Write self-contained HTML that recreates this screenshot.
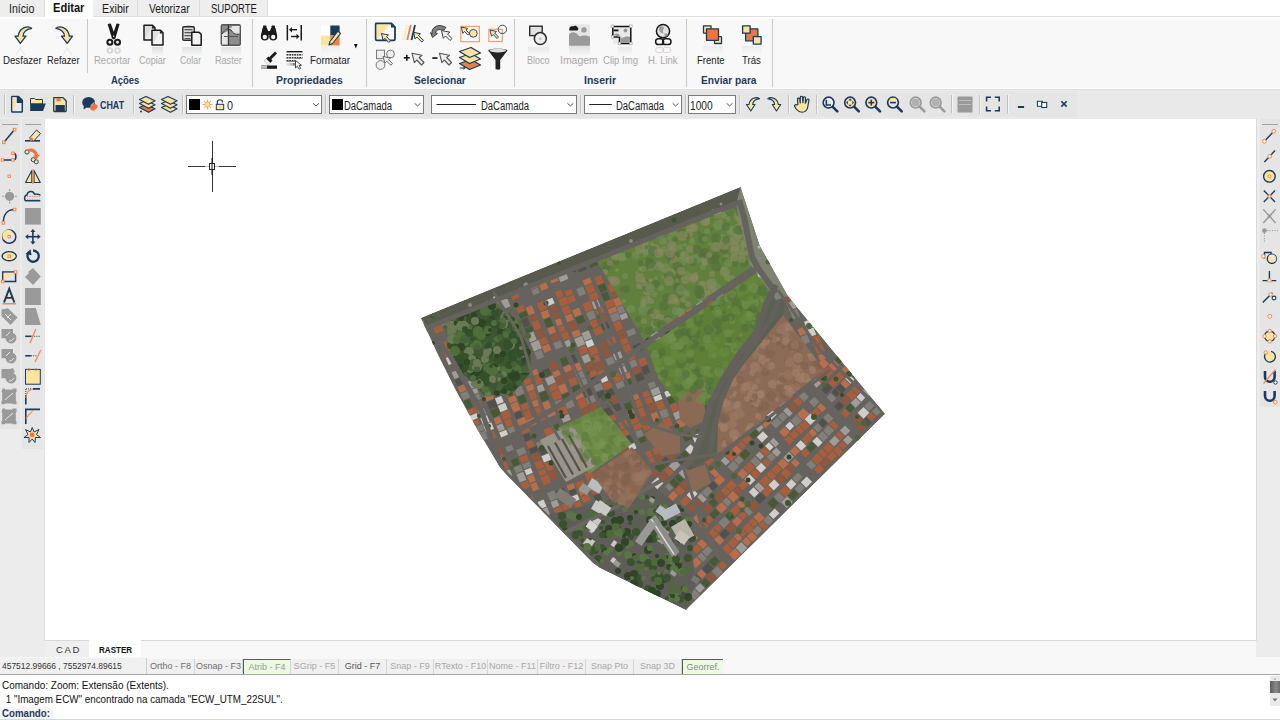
<!DOCTYPE html>
<html><head><meta charset="utf-8">
<style>
*{box-sizing:border-box;margin:0;padding:0}
html,body{width:1280px;height:720px;overflow:hidden;background:#fff}
body{position:relative;font-family:"Liberation Sans",sans-serif;color:#000}
.a{position:absolute}
.t{position:absolute;white-space:nowrap;line-height:1}
svg{position:absolute;overflow:visible}
.tab{position:absolute;top:0;height:16.6px;background:#eeeeee;border-right:1px solid #dcdcdc;font-size:12.5px;color:#1b1b1b}
.tab span{position:absolute;top:2px;white-space:nowrap}
.rl{position:absolute;font-size:11px;color:#a8a8a8;white-space:nowrap;line-height:1;top:55px}
.gl{position:absolute;font-size:10.5px;font-weight:bold;color:#1f3b5e;white-space:nowrap;line-height:1;top:75px}
.sep{position:absolute;top:19px;height:68px;width:1px;background:#c9c9c9}
.tsep{position:absolute;top:94px;height:20px;width:1px;background:#c4c4c4;border-right:1px solid #f6f6f6}
.dd{position:absolute;top:95px;height:19px;background:#fff;border:1px solid #7a7a7a}
.dd .v{position:absolute;right:4px;top:4px}
.sb{position:absolute;top:659px;height:15px;background:#f0f0f0;border-right:1px solid #d6d6d6;font-size:9px;color:#a8a8a8;text-align:center;line-height:15px;white-space:nowrap}
</style></head><body>

<!-- tab strip -->
<div class="tab" style="left:0;width:45px"><span style="left:9px;transform:scaleX(0.846);transform-origin:0 0">Início</span></div>
<div class="a" style="left:45px;top:0;width:48px;height:19px;background:#fff"></div>
<div class="t" style="left:53px;top:2px;font-size:12.5px;font-weight:bold;color:#111;transform:scaleX(0.887);transform-origin:0 0">Editar</div>
<div class="tab" style="left:93px;width:45px"><span style="left:9px;transform:scaleX(0.857);transform-origin:0 0">Exibir</span></div>
<div class="tab" style="left:138px;width:62px"><span style="left:11px;transform:scaleX(0.824);transform-origin:0 0">Vetorizar</span></div>
<div class="tab" style="left:200px;width:68px"><span style="left:11px;transform:scaleX(0.764);transform-origin:0 0">SUPORTE</span></div>

<!-- ribbon -->
<div class="a" style="left:0;top:19px;width:1280px;height:69px;background:#f8f8f8"></div>
<div class="a" style="left:93px;top:16px;width:1187px;height:1px;background:#dedede"></div>
<div class="a" style="left:0;top:88px;width:1280px;height:1px;background:#fff"></div>
<div class="a" style="left:0;top:89px;width:1280px;height:1px;background:#dcdcdc"></div>
<div class="sep" style="left:87px;height:54px"></div>
<div class="sep" style="left:252px"></div>
<div class="sep" style="left:366px"></div>
<div class="sep" style="left:514px"></div>
<div class="sep" style="left:686px"></div>
<div class="sep" style="left:772px"></div>

<div class="rl" style="left:3px;color:#222;transform:scaleX(0.879);transform-origin:0 0">Desfazer</div>
<div class="rl" style="left:47px;color:#222;transform:scaleX(0.846);transform-origin:0 0">Refazer</div>
<div class="rl" style="left:94px;transform:scaleX(0.864);transform-origin:0 0">Recortar</div>
<div class="rl" style="left:139px;transform:scaleX(0.830);transform-origin:0 0">Copiar</div>
<div class="rl" style="left:180px;transform:scaleX(0.802);transform-origin:0 0">Colar</div>
<div class="rl" style="left:215px;transform:scaleX(0.826);transform-origin:0 0">Raster</div>
<div class="rl" style="left:310px;color:#222;transform:scaleX(0.897);transform-origin:0 0">Formatar</div>
<div class="rl" style="left:527px;transform:scaleX(0.819);transform-origin:0 0">Bloco</div>
<div class="rl" style="left:560px;transform:scaleX(0.950);transform-origin:0 0">Imagem</div>
<div class="rl" style="left:603px;transform:scaleX(0.867);transform-origin:0 0">Clip Img</div>
<div class="rl" style="left:648px;transform:scaleX(0.865);transform-origin:0 0">H. Link</div>
<div class="rl" style="left:697px;color:#222;transform:scaleX(0.869);transform-origin:0 0">Frente</div>
<div class="rl" style="left:742px;color:#222;transform:scaleX(0.872);transform-origin:0 0">Trás</div>

<div class="gl" style="left:111px;transform:scaleX(0.9);transform-origin:0 0">Ações</div>
<div class="gl" style="left:276px;transform:scaleX(0.996);transform-origin:0 0">Propriedades</div>
<div class="gl" style="left:414px;transform:scaleX(0.976);transform-origin:0 0">Selecionar</div>
<div class="gl" style="left:584px;transform:scaleX(1.0);transform-origin:0 0">Inserir</div>
<div class="gl" style="left:701px;transform:scaleX(0.971);transform-origin:0 0">Enviar para</div>



<!-- toolbar -->
<div class="a" style="left:0;top:90px;width:1280px;height:29px;background:#e9e9e9"></div>
<div class="a" style="left:0;top:91px;width:1077px;height:26px;background:#e5e5e5"></div>

<!--RIBBON--><svg style="left:0;top:0" width="1280" height="90" viewBox="0 0 1280 90">
<defs>
<linearGradient id="rf" x1="0" y1="0" x2="0" y2="1"><stop offset="0" stop-color="#000" stop-opacity=".18"/><stop offset="1" stop-color="#000" stop-opacity="0"/></linearGradient>
</defs>
<g stroke="#1b3a5c" stroke-width="1.3" fill="#fbe3a0" stroke-linejoin="round">
<path d="M15,36.2 L20.3,43.4 L26,36.2 L23,36.2 C23.2,32 26.5,29.2 31.6,28.3 C28.5,25.6 19.5,26.5 18.2,36.2 Z"/>
<path d="M72.5,36.2 L67.2,43.4 L61.5,36.2 L64.5,36.2 C64.3,32 61,29.2 55.9,28.3 C59,25.6 68,26.5 69.3,36.2 Z"/>
</g>
<g fill="none" stroke="#ccc" stroke-width=".6" opacity=".7"><path d="M16,55 L20.3,48 L25,55"/><path d="M63,55 L67.2,48 L72,55"/></g>
<!-- scissors -->
<g fill="#1a1a1a">
<path d="M107.6,24 L110.8,23.6 L115.2,35.8 L113.4,39.5 L112,38.5 Z"/>
<path d="M119.6,24 L116.6,23.6 L112.4,35.8 L114,39.5 L115.4,38.5 Z"/>
</g>
<circle cx="113.7" cy="36.3" r=".8" fill="#ddd"/>
<g fill="none" stroke="#1a1a1a" stroke-width="2.1"><circle cx="109.9" cy="42.3" r="2.5"/><circle cx="117.5" cy="42.3" r="2.5"/></g>
<g fill="none" stroke="#000" stroke-width="1.8" opacity=".12"><circle cx="109.9" cy="50.5" r="2.4"/><circle cx="117.5" cy="50.5" r="2.4"/></g>
<!-- copy -->
<g stroke="#1a1a1a" stroke-width="1.5" fill="#ebebeb" stroke-linejoin="round">
<path d="M144,25.2 L152.5,25.2 L155,27.7 L155,40 L144,40 Z"/>
<path d="M152,30.2 L160.5,30.2 L163,32.7 L163,45 L152,45 Z" fill="#f4f4f4"/>
</g>
<path d="M151.8,25.4 L154.8,28.4 L151.8,28.4Z" fill="#1a1a1a"/>
<path d="M159.8,30.4 L162.8,33.4 L159.8,33.4Z" fill="#1a1a1a"/>
<path d="M145,39 L152,26 L145,26Z" fill="#dcdcdc"/>
<path d="M153,44 L160,31 L153,31Z" fill="#e2e2e2"/>
<rect x="152" y="47" width="11" height="9" fill="url(#rf)" opacity=".6"/>
<!-- paste -->
<path d="M186.5,25.5 L190.5,25.5 L190.5,27 L186.5,27Z" fill="#999"/>
<g stroke="#2a2a2a" stroke-width="1.4" stroke-linejoin="round">
<rect x="182.8" y="26.8" width="11.5" height="13.4" rx="1" fill="#ddd"/>
</g>
<g fill="#555"><rect x="184.5" y="29" width="8" height="1.3"/><rect x="184.5" y="32" width="8" height="1.3"/><rect x="184.5" y="35" width="8" height="1.3"/><rect x="184.5" y="38" width="6" height="1"/></g>
<path d="M191.8,32.2 L199,32.2 L201.2,34.4 L201.2,45.2 L191.8,45.2 Z" stroke="#1a1a1a" stroke-width="1.5" fill="#f2f2f2" stroke-linejoin="round"/>
<rect x="182" y="47" width="20" height="9" fill="url(#rf)" opacity=".5"/>
<!-- raster -->
<rect x="221.3" y="24.8" width="19" height="20.4" rx="1.5" fill="#8e8e8e" stroke="#555" stroke-width="1.4"/>
<path d="M222,33 C225,29 228,28 231,30 C233,33 235,35 239.5,34 L239.5,26 L232,26 C233,27 231,28 229,28 Z" fill="#e6e6e6"/>
<path d="M222,34 L222,44.5 L228,44.5 L228,31 Z" fill="#e6e6e6"/>
<path d="M222,34 C225,29 228,28 231,30 C233,33 235,35 239.5,34" fill="none" stroke="#333" stroke-width="1"/>
<rect x="227.8" y="25" width="1.3" height="20" fill="#333"/>
<rect x="224" y="36" width="14" height="1" fill="#555"/>
<rect x="221" y="47" width="20" height="9" fill="url(#rf)" opacity=".5"/>
<!-- binoculars -->
<g fill="#1a1a1a">
<rect x="263" y="25.5" width="3.5" height="3" rx=".8"/><rect x="271.5" y="25.5" width="3.5" height="3" rx=".8"/>
<path d="M262.5,28 L267,28 L268,31 L270,31 L271,28 L275.5,28 L277,35 L261,35 Z"/>
<circle cx="264.8" cy="36.5" r="4"/><circle cx="273.2" cy="36.5" r="4"/>
</g>
<g fill="#f0f0f0"><circle cx="264.8" cy="37" r="2.2"/><circle cx="273.2" cy="37" r="2.2"/></g>
<!-- |<-> | -->
<g fill="#1a1a1a">
<rect x="286.6" y="25" width="1.5" height="15.5"/><rect x="300.5" y="25" width="1.5" height="15.5"/>
<rect x="290" y="29" width="7" height="1.4"/><path d="M289,29.7 L292,27 L292,32.4Z"/>
<rect x="291" y="35.8" width="7" height="1.4"/><path d="M299.5,36.5 L296.5,33.8 L296.5,39.2Z"/>
</g>
<!-- brush -->
<g fill="#1a1a1a">
<path d="M275,51.5 L277,53.5 L271,59.5 L269,57.5Z"/>
<path d="M268.5,56.5 L272.5,60.5 L268.5,65 L264,60.5Z"/>
</g>
<path d="M266,58.5 L270.5,63 L268.5,65 L264,60.5Z" fill="#f2f2f2"/>
<rect x="261" y="65.5" width="16" height="3.3" fill="#1a1a1a"/>
<rect x="261" y="65.5" width="6" height="3.3" fill="#bbb"/>
<!-- table -->
<rect x="286.5" y="51" width="16" height="1.4" fill="#1a1a1a"/>
<g fill="#3a3a3a"><rect x="286.5" y="54" width="16" height="1.6"/><rect x="286.5" y="57" width="16" height="1.6"/><rect x="286.5" y="60" width="9" height="1.6"/></g>
<g fill="#f8f8f8"><rect x="288.5" y="54" width=".7" height="7"/><rect x="291" y="54" width=".7" height="7"/><rect x="293.5" y="54" width=".7" height="7"/><rect x="296" y="54" width=".7" height="4"/><rect x="298.5" y="54" width=".7" height="4"/><rect x="301" y="54" width=".7" height="4"/></g>
<g fill="#9a9a9a"><rect x="286.5" y="63" width="3" height="2.6" fill="#ddd"/><rect x="289.5" y="63" width="3" height="2.6" fill="#bbb"/><rect x="292.5" y="63" width="3" height="2.6" fill="#888"/></g>
<path d="M295.5,60.5 L295.5,68 L297.3,66.3 L299.2,69.2 L300.7,68.4 L299,65.6 L301.5,65.3 Z" fill="#fff" stroke="#333" stroke-width=".9" stroke-linejoin="round"/>
<!-- format -->
<rect x="321" y="25.5" width="9.3" height="10" fill="#fff"/>
<rect x="330.3" y="25.5" width="9.3" height="10" fill="#1b3a5c"/>
<rect x="321" y="35.5" width="9.3" height="10" fill="#fbe3a0"/>
<rect x="330.3" y="35.5" width="9.3" height="10" fill="#e8824a"/>
<path d="M338,31 L340.5,33.5 L332.5,43.5 L329,45 L330,41.5 Z" fill="#fbe3a0" stroke="#1b3a5c" stroke-width="1.1" stroke-linejoin="round"/>
<rect x="321" y="46" width="19" height="10" fill="url(#rf)" opacity=".25"/>
<path d="M354,44 L357.6,44 L355.8,48.4Z" fill="#111"/>
</svg>
<svg style="left:0;top:0" width="1280" height="90" viewBox="0 0 1280 90">
<!-- select box -->
<path d="M376,23.5 L391.5,23.5 L395,27 L395,39 C395,40 394.5,40.3 393.5,40.3 L377,40.3 C376,40.3 375.7,40 375.7,39 L375.7,24.5 C375.7,23.8 376,23.5 376,23.5Z" fill="#fafafa" stroke="#1b3a5c" stroke-width="1.8"/>
<path d="M376.6,24.4 L390,24.4 L376.6,39.4Z" fill="#fbe3a0"/>
<path d="M391,23.5 L395,27.5 L391,27.5Z" fill="#1b3a5c"/>
<path d="M381.5,33.5 L388.5,35 L386.5,36.6 L390.5,40.8 L388.8,42.4 L384.8,38.3 L383,40.2 Z" fill="#fbe3a0" stroke="#1b3a5c" stroke-width="1" stroke-linejoin="round"/>
<!-- lines + cursor -->
<path d="M403.5,40 L407,25" stroke="#fbe3a0" stroke-width="1.6" stroke-dasharray="1 .6"/>
<path d="M407.3,40 L410.8,25" stroke="#e8824a" stroke-width="1.8"/>
<path d="M411.5,40 L415,25" stroke="#1b3a5c" stroke-width="1.8"/>
<path d="M413.5,32.3 L420.5,33.8 L418.5,35.4 L423.5,40.4 L421.8,42 L416.8,37 L415,38.9 Z" fill="#fbe3a0" stroke="#1b3a5c" stroke-width="1" stroke-linejoin="round"/>
<!-- rotate cursor -->
<path d="M432,34 C431,28 437,23.5 444,26.5 L446,27.5 L443.5,30.5 C439,28.5 436,30 435.5,33 L437.5,33.5 L432.5,37.5 L430.5,32.5Z" fill="#808080" stroke="#333" stroke-width=".9" stroke-linejoin="round"/>
<path d="M441.5,30.5 L450,32.2 L447.5,34 L452,38.6 L450,40.5 L445.5,36 L443.3,38.3 Z" fill="#eee" stroke="#444" stroke-width="1" stroke-linejoin="round"/>
<!-- orange rect + cursor + circle -->
<rect x="460.8" y="26.4" width="18.6" height="15.3" fill="none" stroke="#f0a070" stroke-width="1.2"/>
<circle cx="473.3" cy="33.3" r="3.9" fill="#fbe3a0" stroke="#1b3a5c" stroke-width=".9"/>
<path d="M461.3,27 L467.8,28.5 L466,30 L469.3,33.5 L467.8,35 L464.5,31.5 L462.8,33.3 Z" fill="#fbe3a0" stroke="#1b3a5c" stroke-width=".9" stroke-linejoin="round"/>
<rect x="488.8" y="29.3" width="13.5" height="12.2" fill="none" stroke="#f0a070" stroke-width="1.2"/>
<circle cx="502.4" cy="29.4" r="4.2" fill="none" stroke="#1b3a5c" stroke-width=".9"/>
<path d="M490,30 L496.5,31.5 L494.7,33 L498.5,37 L497,38.5 L493.2,34.5 L491.5,36.3 Z" fill="#fbe3a0" stroke="#1b3a5c" stroke-width=".9" stroke-linejoin="round"/>
<!-- row 2: shapes cursor -->
<g fill="#eee" stroke="#777" stroke-width="1">
<rect x="376.5" y="50.2" width="8" height="8.5"/>
<circle cx="380.5" cy="65" r="4.4"/>
<circle cx="390.5" cy="54" r="3.9"/>
</g>
<path d="M383,56.5 L390.5,58 L388.5,59.6 L392.5,63.6 L390.8,65.3 L386.8,61.3 L385,63.2 Z" fill="#eee" stroke="#666" stroke-width="1" stroke-linejoin="round"/>
<!-- + cursor -->
<g fill="#1a1a1a"><rect x="403.8" y="57" width="6" height="1.6"/><rect x="406" y="54.8" width="1.6" height="6"/></g>
<path d="M412,53.3 L422,55.3 L419.2,57.5 L424,62.5 L421.5,65 L416.8,60 L414.4,62.7 Z" fill="#eee" stroke="#555" stroke-width="1.1" stroke-linejoin="round"/>
<!-- - cursor -->
<rect x="432.3" y="57.2" width="5.2" height="1.7" fill="#1a1a1a"/>
<path d="M439.5,53.3 L449.5,55.3 L446.7,57.5 L451.5,62.5 L449,65 L444.3,60 L441.9,62.7 Z" fill="#eee" stroke="#555" stroke-width="1.1" stroke-linejoin="round"/>
<!-- layers -->
<g stroke="#1b3a5c" stroke-width="1.3" stroke-linejoin="round">
<path d="M459.5,63.5 L471,59.5 L480.5,65 L469.5,69.5Z" fill="#e8824a"/>
<path d="M459.5,57.5 L471,53.5 L480.5,59 L469.5,63.5Z" fill="#fbe3a0"/>
<path d="M459.5,51.5 L471,47.5 L480.5,53 L469.5,57.5Z" fill="#fbe3a0"/>
</g>
<path d="M459.5,67.5 L463.5,67.5 L463.5,66 L465.5,68 L463.5,70 L463.5,68.5 L459.5,68.5Z" fill="#1b3a5c"/>
<!-- funnel -->
<path d="M488.2,50.5 C488.2,48.3 507.5,48.3 507.5,50.5 L500.2,60 L500.2,68.8 C500.2,70 495.5,70 495.5,68.8 L495.5,60 Z" fill="#222"/>
<ellipse cx="497.85" cy="50.6" rx="8.3" ry="1.8" fill="#ddd"/>
<!-- bloco -->
<rect x="529.7" y="26.2" width="12.5" height="9.4" fill="#e2e2e2" stroke="#2a2a2a" stroke-width="1.4"/>
<circle cx="540.3" cy="38.6" r="6" fill="#eee" stroke="#2a2a2a" stroke-width="1.5"/>
<circle cx="540.3" cy="38.8" r=".9" fill="none" stroke="#999" stroke-width=".6"/>
<rect x="528" y="47" width="21" height="8" fill="url(#rf)" opacity=".35"/>
<!-- imagem -->
<rect x="569" y="24.2" width="21" height="21.5" fill="#e6e6e6"/>
<path d="M569,34.5 C571,31.5 576,31.5 578,35 L580,36.5 C582,35 588,35 590,37 L590,45.7 L569,45.7 Z" fill="#9a9a9a"/>
<circle cx="584" cy="29.9" r="2.7" fill="#9a9a9a"/>
<path d="M569.5,28.5 C569.5,26.5 572,26 573,26.5 C574,25.5 577,25.5 577.5,27.5 C578.5,27.5 578.8,29.5 577.5,30.5 L570,30.5 C569,30.5 569,29 569.5,28.5Z" fill="#1a1a1a"/>
<rect x="569" y="46" width="21" height="10" fill="url(#rf)" opacity=".55"/>
<!-- clip img -->
<rect x="613" y="26.8" width="17.6" height="17" fill="#e9e9e9"/>
<path d="M612.8,26.5 L630.8,26.5 L630.8,43.5 L619.5,43.5 L619.5,37 L612.8,37 Z" fill="none" stroke="#111" stroke-width="1.5"/>
<path d="M614,35 C616,33 619,33 620,36 L621,42.8 L630,42.8 L630,37 C627,36 624,37 622,38" fill="#9a9a9a"/>
<circle cx="625.5" cy="30.5" r="2" fill="#9a9a9a"/>
<path d="M613.5,29.5 L618.5,29.5 L618.5,31.3 L613.5,31.3Z" fill="#111"/>
<g fill="#fff" stroke="#999" stroke-width=".6"><rect x="611.2" y="25" width="2.6" height="2.6"/><rect x="629.5" y="25" width="2.6" height="2.6"/><rect x="611.2" y="35.6" width="2.6" height="2.6"/><rect x="618.2" y="42.2" width="2.6" height="2.6"/><rect x="629.5" y="42.2" width="2.6" height="2.6"/></g>
<rect x="618" y="47" width="14" height="8" fill="url(#rf)" opacity=".35"/>
<!-- hlink -->
<circle cx="663" cy="31.2" r="6.6" fill="#e2e2e2" stroke="#1a1a1a" stroke-width="1.5"/>
<path d="M659.5,27 C661,25.5 664,26 664,28 C663,30 662,31 663.5,33 C662,34 660,32 659,30 Z" fill="#9a9a9a"/>
<path d="M664.5,33.5 C666.5,33 668,34 667.5,36 C666,37 665,36.5 664.5,35Z" fill="#9a9a9a"/>
<g fill="none" stroke="#1a1a1a" stroke-width="1.5"><rect x="655.6" y="38.8" width="8" height="5.8" rx="2.9"/><rect x="662.6" y="38.8" width="8.4" height="5.8" rx="2.9"/></g>
<g fill="none" stroke="#000" stroke-width="1" opacity=".13"><rect x="655.6" y="47.5" width="8" height="5" rx="2.5"/><rect x="662.6" y="47.5" width="8.4" height="5" rx="2.5"/></g>
<!-- frente -->
<g stroke="#1b3a5c" stroke-width="1.3" stroke-linejoin="round">
<rect x="703.5" y="25.8" width="7.5" height="7.3" fill="#fbe3a0"/>
<rect x="714.5" y="36.7" width="7" height="6.8" fill="#fbe3a0"/>
<rect x="706.5" y="28.8" width="12" height="11.5" fill="#ee7440"/>
<rect x="745.6" y="28.8" width="12.3" height="12" fill="#ee7440"/>
<rect x="742.6" y="25.8" width="7.5" height="7.4" fill="#fbe3a0"/>
<rect x="753.3" y="36.7" width="7.8" height="7.4" fill="#fbe3a0"/>
</g>
<rect x="703" y="46" width="20" height="9" fill="url(#rf)" opacity=".3"/>
<rect x="742" y="46" width="20" height="9" fill="url(#rf)" opacity=".3"/>
</svg>
<svg style="left:0;top:0" width="1280" height="120" viewBox="0 0 1280 120">
<g fill="#c2c2c2"><rect x="4" y="94" width="1" height="20.5"/><rect x="73" y="95" width="1" height="18.5"/><rect x="133" y="95" width="1" height="18.5"/><rect x="182" y="95" width="1" height="18.5"/><rect x="325" y="95" width="1" height="18.5"/><rect x="580" y="95" width="1" height="18.5"/><rect x="685" y="95" width="1" height="18.5"/><rect x="739" y="95" width="1" height="18.5"/><rect x="788" y="95" width="1" height="18.5"/><rect x="816" y="95" width="1" height="18.5"/><rect x="951" y="95" width="1" height="18.5"/><rect x="979" y="95" width="1" height="18.5"/><rect x="1007" y="95" width="1" height="18.5"/></g>
<g fill="#f4f4f4"><rect x="5" y="94" width="1" height="20.5"/><rect x="74" y="95" width="1" height="18.5"/><rect x="134" y="95" width="1" height="18.5"/><rect x="183" y="95" width="1" height="18.5"/><rect x="326" y="95" width="1" height="18.5"/><rect x="581" y="95" width="1" height="18.5"/><rect x="686" y="95" width="1" height="18.5"/><rect x="740" y="95" width="1" height="18.5"/><rect x="789" y="95" width="1" height="18.5"/><rect x="817" y="95" width="1" height="18.5"/><rect x="952" y="95" width="1" height="18.5"/><rect x="980" y="95" width="1" height="18.5"/><rect x="1008" y="95" width="1" height="18.5"/></g>
<!-- new doc -->
<path d="M11.8,96.6 L18.5,96.6 L22.3,100.4 L22.3,111.2 C22.3,111.8 22,112 21.4,112 L12.6,112 C12,112 11.7,111.8 11.7,111.2 Z" fill="#e6ebf0" stroke="#1b3a5c" stroke-width="1.5" stroke-linejoin="round"/>
<path d="M12.5,97.3 L15.8,97.3 L15.8,106 L12.5,111.3Z" fill="#fbe3a0"/>
<path d="M16.8,97 L18.5,97 L22,100.5 L22,103 L16.8,103 Z" fill="#1b3a5c"/>
<!-- open folder -->
<path d="M30.5,98.5 L34.5,98.5 L35.5,99.5 L42.5,99.5 L42.5,104 L30.5,104Z" fill="#fbe3a0" stroke="#1b3a5c" stroke-width="1"/>
<path d="M30.2,111 L30.2,103.5 L45.8,103.5 L43,111Z" fill="#1b3a5c"/>
<!-- save -->
<path d="M53.8,97.6 L63,97.6 L66.2,101 L66.2,110.8 C66.2,111.3 66,111.5 65.5,111.5 L54.4,111.5 C53.9,111.5 53.7,111.3 53.7,110.8 Z" fill="#fbe3a0" stroke="#1b3a5c" stroke-width="1.3" stroke-linejoin="round"/>
<rect x="56.5" y="98" width="4" height="3.2" fill="#ee7440"/>
<rect x="55.5" y="105" width="9.3" height="6" fill="#1b3a5c"/>
<!-- chat -->
<ellipse cx="88.6" cy="102.4" rx="6.4" ry="5.4" fill="#1b3a5c"/>
<path d="M84,105.5 L83.5,109.5 L88,106.5Z" fill="#1b3a5c"/>
<path d="M92,104.5 C95,103 98,104.5 97.5,107 C97,109 95,110 94,110 L95,111.5 L91.5,110 C90,109.5 89.5,106.5 92,104.5Z" fill="#ee7440"/>
<path d="M94.5,102.3 C93,104 91.5,104.5 90.5,106" stroke="#e6e6e6" stroke-width="1" fill="none"/>
<!-- layers 1 -->
<g stroke="#1b3a5c" stroke-width="1.2" stroke-linejoin="round">
<path d="M139.5,107.5 L146,104.5 L155,108.8 L148.5,112.3Z" fill="#ee7440"/>
<path d="M139.5,103.5 L146,100.5 L155,104.8 L148.5,108.3Z" fill="#fbe3a0"/>
<path d="M139.5,99.5 L146,96.5 L155,100.8 L148.5,104.3Z" fill="#fbe3a0"/>
<path d="M161.5,107.5 L168,104.5 L177,108.8 L170.5,112.3Z" fill="#fbe3a0"/>
<path d="M161.5,103.5 L168,100.5 L177,104.8 L170.5,108.3Z" fill="#fbe3a0"/>
<path d="M161.5,99.5 L168,96.5 L177,100.8 L170.5,104.3Z" fill="#fbe3a0"/>
</g>
<circle cx="141" cy="111.5" r="1" fill="#1b3a5c"/>
<!-- small undo/redo -->
<g stroke="#1b3a5c" stroke-width="1.1" fill="#fbe3a0" stroke-linejoin="round">
<path d="M746.5,104.5 L750.8,111 L755,104.5 L752.7,104.5 C752.8,101.3 755,99.3 759.5,98.6 C756.5,96.6 750,97.8 749,104.5 Z"/>
<path d="M780.8,104.5 L776.5,111 L772.3,104.5 L774.6,104.5 C774.5,101.3 772.3,99.3 767.8,98.6 C770.8,96.6 777.3,97.8 778.3,104.5 Z"/>
</g>
<!-- hand -->
<path transform="translate(794.4 96) scale(1.12 1) translate(-794.4 -96)" d="M797.5,104.5 L797.2,99 C797.2,97.8 799,97.8 799.2,99 L799.6,103 L799.7,97.2 C799.7,96 801.6,96 801.7,97.2 L802,102.8 L802.4,97.6 C802.5,96.5 804.3,96.5 804.3,97.8 L804.2,103.3 L805.6,99.6 C806,98.6 807.6,98.9 807.4,100 L806.5,106 C806,110 804,112.3 801,112.3 C798.5,112.3 797.5,111 796,109 L794.6,106.3 C794,105.2 795.5,104.2 796.5,105 Z" fill="#fbe3a0" stroke="#1b3a5c" stroke-width="1.1" stroke-linejoin="round"/>
<!-- magnifiers -->
<g stroke="#1b3a5c" fill="none">
<g stroke-width="1.7"><circle cx="828.6" cy="102.6" r="5.4"/><circle cx="850.1" cy="102.6" r="5.4"/><circle cx="871.3" cy="102.6" r="5.4"/><circle cx="893" cy="102.6" r="5.4"/></g>
<g stroke-width="2.6" stroke-linecap="round"><path d="M832.8,106.8 L837.3,111.3"/><path d="M854.3,106.8 L858.8,111.3"/><path d="M875.5,106.8 L880,111.3"/><path d="M897.2,106.8 L901.7,111.3"/></g>
</g>
<circle cx="828.6" cy="102.6" r="3.8" fill="none" stroke="#fff" stroke-width="1"/>
<path d="M826.3,99.8 L826.3,105 L831,105" fill="none" stroke="#1b3a5c" stroke-width="1.6"/>
<circle cx="850.1" cy="102.6" r="4.2" fill="#fbe3a0"/>
<g fill="#1b3a5c"><path d="M850.1,98.6 L852,100.4 L848.2,100.4Z"/><path d="M850.1,106.6 L852,104.8 L848.2,104.8Z"/><path d="M846.1,102.6 L847.9,100.7 L847.9,104.5Z"/><path d="M854.1,102.6 L852.3,100.7 L852.3,104.5Z"/></g>
<circle cx="871.3" cy="102.6" r="4.2" fill="#fbe3a0"/>
<g fill="#1b3a5c"><rect x="868.3" y="101.8" width="6" height="1.6"/><rect x="870.5" y="99.6" width="1.6" height="6"/></g>
<path d="M889,101 A4.2,4.2 0 0 1 897.2,101 Z" fill="#fbe3a0"/>
<path d="M893,98.4 A4.2,4.2 0 0 1 897.2,102.6 L888.8,102.6 A4.2,4.2 0 0 1 893,98.4Z" fill="#fbe3a0"/>
<rect x="890" y="101.8" width="6" height="1.6" fill="#1b3a5c"/>
<g stroke="#9a9a9a" fill="none">
<g stroke-width="1.7"><circle cx="915.7" cy="102.6" r="5.4"/><circle cx="935.7" cy="102.6" r="5.4"/></g>
<g stroke-width="2.6" stroke-linecap="round"><path d="M919.9,106.8 L924.4,111.3"/><path d="M939.9,106.8 L944.4,111.3"/></g>
</g>
<circle cx="915.7" cy="102.6" r="4" fill="#b0b0b0"/><circle cx="935.7" cy="102.6" r="4" fill="#b0b0b0"/>
<!-- grey rect icon -->
<rect x="957.5" y="96.5" width="15" height="16" fill="#9a9a9a"/>
<g fill="#c8c8c8"><rect x="959" y="100" width="12" height=".8"/><rect x="959" y="104" width="12" height=".8"/></g>
<!-- fullscreen -->
<path d="M986.6,101.5 L986.6,97.3 L991,97.3 M994.8,97.3 L999.2,97.3 L999.2,101.5 M999.2,106.5 L999.2,110.8 L994.8,110.8 M991,110.8 L986.6,110.8 L986.6,106.5" fill="none" stroke="#1b3a5c" stroke-width="1.6"/>
<!-- min restore close -->
<rect x="1017.9" y="106" width="6.2" height="2" fill="#1b3a5c"/>
<rect x="1037.4" y="101.3" width="5" height="5" fill="#fff" stroke="#1b3a5c" stroke-width="1"/>
<rect x="1041.7" y="102.5" width="5" height="5" fill="#fff" stroke="#1b3a5c" stroke-width="1.1"/>
<path d="M1061.3,101.3 L1066.7,106.6 M1066.7,101.3 L1061.3,106.6" stroke="#1b3a5c" stroke-width="1.6"/>
</svg>
<!--/RIBBON-->
<!-- toolbar widgets -->
<div class="t" style="left:100px;top:100px;font-size:11px;font-weight:bold;color:#1b3a5c;transform:scaleX(0.81);transform-origin:0 0">CHAT</div>
<div class="dd" style="left:186px;width:136px"></div>
<div class="a" style="left:189px;top:99px;width:11px;height:11px;background:#000"></div>
<div class="t" style="left:227px;top:100px;font-size:12px;color:#222;transform:scaleX(0.9);transform-origin:0 0">0</div>
<div class="dd" style="left:329px;width:95px"></div>
<div class="a" style="left:332px;top:99px;width:11px;height:11px;background:#000"></div>
<div class="t" style="left:344px;top:100px;font-size:12px;color:#222;transform:scaleX(0.79);transform-origin:0 0">DaCamada</div>
<div class="dd" style="left:431px;width:146px"></div>
<div class="t" style="left:481px;top:100px;font-size:12px;color:#222;transform:scaleX(0.79);transform-origin:0 0">DaCamada</div>
<div class="dd" style="left:584px;width:98px"></div>
<div class="t" style="left:616px;top:100px;font-size:12px;color:#222;transform:scaleX(0.79);transform-origin:0 0">DaCamada</div>
<div class="dd" style="left:688px;width:48px"></div>
<div class="t" style="left:690px;top:100px;font-size:12px;color:#222;transform:scaleX(0.85);transform-origin:0 0">1000</div>
<svg style="left:0;top:0" width="1280" height="120" viewBox="0 0 1280 120">
<g stroke="#f2a05a" stroke-width="1"><path d="M207.4,99.5 L207.4,109.5 M202.4,104.5 L212.4,104.5 M203.9,101 L210.9,108 M210.9,101 L203.9,108"/></g>
<circle cx="207.4" cy="104.5" r="2.6" fill="#fbe3a0" stroke="#f2a05a" stroke-width=".8"/>
<path d="M217.3,104.5 L217.3,102 C217.3,99 222.5,99 222.5,102 L222.5,102.5" fill="none" stroke="#1b3a5c" stroke-width="1.2"/>
<rect x="216.3" y="104.3" width="7.4" height="5.4" fill="#fbe3a0" stroke="#1b3a5c" stroke-width="1"/>
<g fill="none" stroke="#555" stroke-width="1"><path d="M313,103.2 L316,106 L319,103.2"/><path d="M414.6,103.2 L417.6,106 L420.6,103.2"/><path d="M567.4,103.2 L570.4,106 L573.4,103.2"/><path d="M672.6,103.2 L675.6,106 L678.6,103.2"/><path d="M726.6,103.2 L729.6,106 L732.6,103.2"/></g>
<rect x="436.5" y="104" width="39.5" height="1" fill="#222"/>
<rect x="589.2" y="104" width="22.6" height="1" fill="#222"/>
</svg>

<!-- left panel -->
<div class="a" style="left:0;top:119px;width:45px;height:539px;background:#ececec"></div>
<div class="a" style="left:0;top:119px;width:20px;height:310px;background:#e5e5e5"></div>
<div class="a" style="left:22px;top:119px;width:21px;height:330px;background:#e5e5e5"></div>
<div class="a" style="left:2px;top:124px;width:16px;height:1px;background:#a0a0a0"></div>
<div class="a" style="left:25px;top:124px;width:16px;height:1px;background:#a0a0a0"></div>

<!-- right panel -->
<div class="a" style="left:1256px;top:119px;width:24px;height:539px;background:#ececec"></div>
<div class="a" style="left:1260px;top:119px;width:20px;height:288px;background:#e5e5e5"></div>
<div class="a" style="left:1262px;top:124px;width:16px;height:1px;background:#a0a0a0"></div>

<!--SIDE--><svg style="left:0;top:0" width="1280" height="720" viewBox="0 0 1280 720">
<g fill="none" stroke="#1b3a5c" stroke-width="1.5">
<path d="M3.8,142.5 L14.6,129.6"/>
<path d="M2.5,160 L12.9,160 M12.9,153.3 C17,153.5 17,159.8 12.9,160"/>
<path d="M3.3,222.9 C3.3,215 7,209.6 14.6,209.6"/>
<circle cx="9.2" cy="236.7" r="6.6"/>
<ellipse cx="9.2" cy="256.25" rx="7" ry="4.5"/>
<rect x="2.8" y="272" width="12.8" height="9.5"/>
</g>
<path d="M4,240 A6,6 0 0 1 12.5,231.5 Z" fill="#fbe3a0"/>
<path d="M3,236.7 A6.1,6.1 0 0 1 15,236.7 L3,236.7Z" fill="#fbe3a0" opacity="0"/>
<ellipse cx="9.2" cy="256.25" rx="6.2" ry="3.7" fill="#fbe3a0"/>
<path d="M3.6,272.8 L14.8,272.8 L3.6,280.8Z" fill="#fbe3a0"/>
<g fill="#fff3e8" stroke="#f08a50" stroke-width="1">
<rect x="2.5" y="141" width="2.6" height="2.6"/><rect x="13.3" y="128.3" width="2.6" height="2.6"/>
<rect x="1.3" y="158.7" width="2.4" height="2.4"/><rect x="11.7" y="158.7" width="2.4" height="2.4"/><rect x="11.7" y="152.1" width="2.4" height="2.4"/>
<rect x="8" y="175" width="2.4" height="2.4"/>
<rect x="2" y="221.6" width="2.6" height="2.6"/><rect x="13.3" y="208.3" width="2.6" height="2.6"/>
<rect x="8" y="235.5" width="2.4" height="2.4"/>
<rect x="8" y="255" width="2.4" height="2.4"/>
<rect x="14.3" y="270.7" width="2.6" height="2.6"/><rect x="1.5" y="280.2" width="2.6" height="2.6"/>
</g>
<circle cx="9.6" cy="196.3" r="4.6" fill="#9a9a9a"/>
<path d="M9.6,189 L9.6,191 M9.6,201.6 L9.6,203.6 M2.3,196.3 L4.3,196.3 M14.9,196.3 L16.9,196.3" stroke="#9a9a9a" stroke-width="1"/>
<path d="M4,302.5 L9.2,288.8 L14.4,302.5 M5.8,297.8 L12.6,297.8" fill="none" stroke="#1b3a5c" stroke-width="2"/><path d="M7.6,297 L9.2,292.5 L10.8,297Z" fill="#fbe3a0"/>
<rect x="2.5" y="303" width="13.5" height="1.5" fill="#f08a50"/>
<!-- grey col1 -->
<g fill="#9a9a9a">
<path d="M1.5,309.5 L8,308.2 L17.5,317.5 L10.5,325 L1.5,316Z"/>
<path d="M1.5,329 L13,329 L13,333 A5.4,5.4 0 1 1 5.6,338.3 L1.5,338.3Z"/>
<path d="M1.5,349 L13,349 L13,353 A5.4,5.4 0 1 1 5.6,358.3 L1.5,358.3Z"/>
<path d="M1.5,369 L10,369 L13,368 L15,372 L13,373 A5.4,5.4 0 1 1 5.6,378.3 L1.5,378.3Z"/>
<path d="M2.5,388.5 L5,388.5 L5,389.5 L12.5,389.5 L12.5,388.5 L16.5,388.5 L16.5,392 L15.8,392 L15.8,401 L16.5,401 L16.5,404.3 L12.5,404.3 L12.5,403.5 L5,403.5 L5,404.3 L1.5,404.3 L1.5,401 L2.2,401 L2.2,392 L1.5,392Z"/>
<path d="M2.5,408.5 L5,408.5 L5,409.5 L12.5,409.5 L12.5,408.5 L16.5,408.5 L16.5,412 L15.8,412 L15.8,421 L16.5,421 L16.5,424.3 L12.5,424.3 L12.5,423.5 L5,423.5 L5,424.3 L1.5,424.3 L1.5,421 L2.2,421 L2.2,412 L1.5,412Z"/>
<rect x="25" y="208" width="15.8" height="16.6"/>
<path d="M33,268 L40.8,276.5 L33,285 L25,277 L29,273 L28,272Z"/>
<rect x="25" y="288" width="15.8" height="17"/>
<path d="M25,308 L35.8,308 L40.8,325 L25,325Z"/>
</g>
<g fill="none" stroke="#e8e8e8" stroke-width="1"><path d="M5,314 L11,320 M11,314 L7,318"/><path d="M6,336 L10,332 M9,341 C11,341 13,340 14,338"/><path d="M6,356 L10,352 M9,361 C11,361 13,360 14,358"/><path d="M9,381 C11,381 13,380 14,378"/><path d="M5,400 L13,393"/><path d="M5,420 L13,413"/></g>
<!-- col2 -->
<path d="M25,140.8 L40,140.8" stroke="#1b3a5c" stroke-width="1.6"/>
<path d="M29.5,138 L36.5,130 L40.5,133.5 L33.5,141.3Z" fill="#fbe3a0" stroke="#1b3a5c" stroke-width="1"/>
<circle cx="31.3" cy="139.3" r="1.8" fill="#ee7440"/>
<g fill="#fbe3a0" stroke="#1b3a5c" stroke-width=".9"><circle cx="27" cy="152" r="2.1"/><circle cx="33.3" cy="159.7" r="2.1"/><circle cx="36.3" cy="161.8" r="2"/></g>
<path d="M27.5,149.5 C32,147 37,150 38,155 L40,154.5 L36.5,159.5 L33,155.5 L35,155.3 C34,152.5 31,151 28,151.8Z" fill="#ee7440"/>
<g stroke="#1b3a5c" stroke-width="1.1" fill="#fbe3a0" stroke-linejoin="round"><path d="M25.5,182.5 L31.8,170.5 L31.8,182.5Z"/><path d="M40.3,182.5 L34,170.5 L34,182.5Z"/></g>
<rect x="32.3" y="169" width="1.3" height="15" fill="#f08a50"/>
<path d="M26,200.8 C24,200.8 24,195 27,195 C27.5,191 33,190 34.5,194.3 C36,194 40.3,194 40.3,195.5 M26,200.8 L40.3,200.8" fill="none" stroke="#1b3a5c" stroke-width="1.4"/>
<path d="M27,196.5 L40,196.5 M27,199.3 L40,199.3" stroke="#f08a50" stroke-width="1" stroke-dasharray="1 .7"/>
<g fill="#1b3a5c">
<rect x="32.1" y="231" width="1.6" height="11.5"/><rect x="27.2" y="235.9" width="11.5" height="1.6"/>
<path d="M32.9,229 L35.5,232 L30.3,232Z"/><path d="M32.9,244.4 L35.5,241.4 L30.3,241.4Z"/><path d="M25.2,236.7 L28.2,234.1 L28.2,239.3Z"/><path d="M40.6,236.7 L37.6,234.1 L37.6,239.3Z"/>
</g>
<path d="M29,252.3 A5.6,5.6 0 1 0 33,250.5" fill="none" stroke="#1b3a5c" stroke-width="2.3"/>
<path d="M25.5,254 L30.5,249.3 L31.5,255.3Z" fill="#1b3a5c"/>
<path d="M25.2,336.3 L31.5,336.3" stroke="#1b3a5c" stroke-width="1.6"/>
<path d="M32,336.3 L40.5,336.3" stroke="#1b3a5c" stroke-width="1" stroke-dasharray="1 1.2"/>
<path d="M30,343.3 L35.8,329" stroke="#f08a50" stroke-width="1.3"/>
<path d="M25.2,355.8 L30.8,355.8" stroke="#1b3a5c" stroke-width="1.6"/>
<path d="M31,355.8 L37,355.8" stroke="#1b3a5c" stroke-width="1" stroke-dasharray="1 1.2"/>
<path d="M35,362 L40.8,350" stroke="#f08a50" stroke-width="1.3"/>
<rect x="25.5" y="369.4" width="14.8" height="14.8" fill="#fbe3a0" stroke="#1b3a5c" stroke-width="1"/>
<g fill="none" stroke="#f08a50" stroke-width=".9"><circle cx="29" cy="369.5" r="1.1"/><circle cx="36" cy="369.5" r="1.1"/></g>
<path d="M25.8,395 L25.8,404.5 M33,388.9 L40,388.9" stroke="#1b3a5c" stroke-width="1.6"/>
<path d="M25.8,389 L25.8,394 M26,388.9 L32,388.9" stroke="#1b3a5c" stroke-width="1" stroke-dasharray="1 1"/>
<path d="M25.8,398 C26,393 28,390 33,388.9" fill="none" stroke="#f08a50" stroke-width="1.1"/>
<path d="M25.8,423.9 L25.8,409.4 L40,409.4" fill="none" stroke="#1b3a5c" stroke-width="1.6"/>
<path d="M25.8,418.3 L33.3,410" stroke="#f08a50" stroke-width="1.1"/>
<path d="M32.2,427.5 L34,432 L39,429.5 L36.5,434.5 L40.5,437.5 L35.5,437.5 L35,442.5 L32.2,439 L29,442.5 L29,437.5 L24,437.5 L28,434.5 L25.5,429.5 L30.5,432Z" fill="#fbe3a0" stroke="#1b3a5c" stroke-width="1"/>
<circle cx="32.2" cy="435" r="2.4" fill="#ee7440"/>
<!-- right col -->
<g fill="none" stroke="#1b3a5c" stroke-width="1.4">
<path d="M1264.4,141.3 L1273.8,131.3"/>
<path d="M1264.4,161.9 L1275,150.6"/>
<path d="M1263.8,190.6 L1275,201.9 M1275,190.6 L1263.8,201.9"/>
<path d="M1271,254.5 L1271,252.5 L1264.5,252.5 L1264.5,258.5"/>
<path d="M1269.4,271 L1269.4,281 M1262.5,280.6 L1276.3,280.6"/>
<path d="M1262.8,302.4 L1272.4,292.8"/>
</g>
<circle cx="1269.4" cy="176.3" r="5.8" fill="#fbe3a0" stroke="#1b3a5c" stroke-width="1.4"/>
<circle cx="1271.9" cy="258.8" r="4.6" fill="#fbe3a0" stroke="#1b3a5c" stroke-width="1.3"/>
<path d="M1268.6,255.5 A4.6,4.6 0 0 1 1275.2,262" fill="#eee" opacity=".6"/>
<circle cx="1269.75" cy="336.2" r="5.2" fill="#fbe3a0" stroke="#1b3a5c" stroke-width="1.3"/>
<circle cx="1269.75" cy="356.8" r="5.3" fill="#fbe3a0"/>
<path d="M1265.6,353.5 A5.4,5.4 0 1 0 1271,351.4" fill="none" stroke="#1b3a5c" stroke-width="1.3"/>
<circle cx="1274" cy="298" r="1.9" fill="#fff" stroke="#1b3a5c" stroke-width="1.1"/>
<path d="M1265,371 L1265,377 A4.8,4.8 0 0 0 1274.6,377 L1274.6,371" fill="none" stroke="#1b3a5c" stroke-width="2.6"/>
<path d="M1265,391 L1265,396 A4.8,4.8 0 0 0 1274.6,396 L1274.6,391" fill="none" stroke="#1b3a5c" stroke-width="2.6"/>
<path d="M1263.5,383.5 L1275.5,369.5" stroke="#f08a50" stroke-width="1.3"/>
<g fill="#fff3e8" stroke="#f08a50" stroke-width="1">
<circle cx="1264.4" cy="141.3" r="1.9"/><circle cx="1273.8" cy="131.3" r="1.9"/>
<circle cx="1269.75" cy="156.3" r="1.9"/>
<circle cx="1269.4" cy="176.3" r="1.6"/>
<rect x="1268.2" y="195" width="2.6" height="2.6"/>
<circle cx="1263.4" cy="256.3" r="1.8"/>
<circle cx="1269.4" cy="280.6" r="1.8"/>
<circle cx="1270.6" cy="294.5" r="1.8"/>
<circle cx="1269.75" cy="316.3" r="2"/>
<circle cx="1269.75" cy="331" r="1.7"/><circle cx="1269.75" cy="341.4" r="1.7"/><circle cx="1264.5" cy="336.2" r="1.7"/><circle cx="1275" cy="336.2" r="1.7"/>
<circle cx="1265.8" cy="352.6" r="1.7"/>
<circle cx="1275.3" cy="402.2" r="1.8"/>
</g>
<circle cx="1275.5" cy="382.5" r="1.7" fill="#fff" stroke="#1b3a5c" stroke-width="1"/>
<g stroke="#9a9a9a" stroke-width="1.4" fill="none"><path d="M1263.3,209.4 L1275.6,223 M1275.6,209.4 L1263.3,223"/></g>
<rect x="1267.8" y="214.5" width="3.4" height="3.4" fill="#9a9a9a"/>
<circle cx="1264.4" cy="230.6" r="2.4" fill="#9a9a9a"/>
<path d="M1267,230.6 L1278,230.6 M1264.4,233 L1264.4,242" stroke="#9a9a9a" stroke-width="1" stroke-dasharray="1.2 1.3"/>
</svg>
<!--/SIDE-->

<!-- canvas -->
<div class="a" style="left:44px;top:119px;width:1213px;height:522px;background:#fff;border-bottom:1px solid #d8d8d8;border-left:1px solid #e2e2e2;border-right:1px solid #dadada"></div>

<!--AERIAL--><svg style="left:0;top:0" width="1280" height="720" viewBox="0 0 1280 720">
<defs><clipPath id="cl"><polygon points="421,318 740.6,187 760,246 772,267.5 788,296 885,414 686,610 600,568 592,562 506,474 499,466 477,429 455,389 437,353"/></clipPath></defs>
<g clip-path="url(#cl)">
<polygon points="421,318 740.6,187 760,246 772,267.5 788,296 885,414 686,610 600,568 592,562 506,474 499,466 477,429 455,389 437,353" fill="#66635e"/>
<g transform="translate(650 250) rotate(-22.4)">
<g fill="#a85d3d"><rect x="-230.0" y="-10.3" width="8.3" height="6.1"/><rect x="-230.0" y="6.4" width="6.8" height="7.0"/><rect x="-230.0" y="14.3" width="7.7" height="6.8"/><rect x="-230.0" y="78.6" width="8.2" height="5.1"/><rect x="-230.0" y="90.8" width="6.5" height="5.1"/><rect x="-221.0" y="74.4" width="6.6" height="7.1"/><rect x="-221.0" y="107.0" width="7.6" height="8.1"/><rect x="-221.0" y="132.1" width="7.0" height="7.4"/><rect x="-221.0" y="140.5" width="7.1" height="7.8"/><rect x="-209.0" y="166.3" width="7.9" height="7.0"/><rect x="-209.0" y="181.5" width="6.8" height="5.7"/><rect x="-200.0" y="93.9" width="8.5" height="7.6"/><rect x="-200.0" y="102.5" width="6.8" height="7.0"/><rect x="-200.0" y="141.7" width="8.0" height="6.9"/><rect x="-188.0" y="75.4" width="7.8" height="6.4"/><rect x="-188.0" y="113.7" width="8.5" height="8.1"/><rect x="-188.0" y="130.7" width="6.6" height="6.4"/><rect x="-188.0" y="152.5" width="7.7" height="8.1"/><rect x="-188.0" y="161.7" width="7.4" height="5.6"/><rect x="-188.0" y="168.3" width="8.1" height="8.8"/><rect x="-188.0" y="202.8" width="8.2" height="6.5"/><rect x="-179.0" y="94.2" width="7.5" height="6.2"/><rect x="-179.0" y="101.4" width="6.5" height="7.9"/><rect x="-179.0" y="157.0" width="6.9" height="9.0"/><rect x="-179.0" y="202.1" width="8.1" height="6.2"/><rect x="-167.0" y="72.0" width="7.2" height="5.8"/><rect x="-167.0" y="85.6" width="7.7" height="8.3"/><rect x="-167.0" y="102.5" width="7.2" height="6.0"/><rect x="-167.0" y="109.5" width="7.0" height="7.3"/><rect x="-167.0" y="125.6" width="8.4" height="8.3"/><rect x="-167.0" y="205.0" width="6.9" height="5.5"/><rect x="-158.0" y="73.0" width="8.4" height="8.8"/><rect x="-158.0" y="186.9" width="8.4" height="7.0"/><rect x="-158.0" y="201.8" width="8.1" height="6.7"/><rect x="-146.0" y="-13.0" width="7.6" height="7.0"/><rect x="-146.0" y="2.5" width="7.5" height="5.5"/><rect x="-146.0" y="87.5" width="8.3" height="5.9"/><rect x="-146.0" y="94.4" width="8.3" height="8.7"/><rect x="-146.0" y="111.4" width="8.4" height="8.2"/><rect x="-146.0" y="181.6" width="8.2" height="7.7"/><rect x="-146.0" y="190.3" width="8.2" height="5.1"/><rect x="-146.0" y="196.5" width="6.8" height="8.4"/><rect x="-137.0" y="21.7" width="6.8" height="8.9"/><rect x="-137.0" y="40.4" width="7.7" height="6.6"/><rect x="-125.0" y="6.4" width="7.9" height="8.7"/><rect x="-125.0" y="88.7" width="7.4" height="7.4"/><rect x="-125.0" y="111.8" width="8.3" height="8.8"/><rect x="-116.0" y="36.2" width="7.2" height="6.1"/><rect x="-116.0" y="43.3" width="8.4" height="7.7"/><rect x="-104.0" y="2.5" width="6.5" height="7.4"/><rect x="-104.0" y="11.0" width="8.6" height="7.7"/><rect x="-104.0" y="19.7" width="7.6" height="8.1"/><rect x="-104.0" y="63.4" width="8.1" height="7.8"/><rect x="-104.0" y="89.7" width="8.1" height="5.5"/><rect x="-104.0" y="138.5" width="8.3" height="5.6"/><rect x="-95.0" y="5.8" width="7.2" height="5.3"/><rect x="-95.0" y="12.2" width="7.3" height="6.5"/><rect x="-95.0" y="67.6" width="8.2" height="7.7"/><rect x="-95.0" y="76.3" width="7.1" height="7.1"/><rect x="-95.0" y="92.8" width="6.6" height="5.2"/><rect x="-95.0" y="105.8" width="8.1" height="6.4"/><rect x="-95.0" y="147.4" width="8.2" height="8.2"/><rect x="-95.0" y="156.6" width="7.4" height="5.8"/><rect x="-83.0" y="24.0" width="8.0" height="9.0"/><rect x="-83.0" y="43.1" width="6.5" height="7.6"/><rect x="-83.0" y="51.7" width="8.3" height="7.1"/><rect x="-83.0" y="101.8" width="7.6" height="7.5"/><rect x="-83.0" y="149.6" width="8.1" height="5.1"/><rect x="-83.0" y="155.7" width="8.5" height="5.8"/><rect x="-83.0" y="185.2" width="7.1" height="6.2"/><rect x="-83.0" y="192.4" width="7.2" height="6.3"/><rect x="-74.0" y="9.3" width="7.8" height="7.8"/><rect x="-74.0" y="18.1" width="8.5" height="6.8"/><rect x="-74.0" y="34.9" width="8.4" height="5.3"/><rect x="-74.0" y="66.0" width="8.1" height="6.6"/><rect x="-74.0" y="134.1" width="8.3" height="7.2"/><rect x="-74.0" y="142.3" width="7.5" height="8.9"/><rect x="-74.0" y="159.2" width="6.7" height="6.0"/><rect x="-74.0" y="184.6" width="8.6" height="6.8"/><rect x="-62.0" y="4.2" width="6.9" height="8.3"/><rect x="-62.0" y="31.0" width="8.3" height="7.0"/><rect x="-62.0" y="53.7" width="7.2" height="8.9"/><rect x="-62.0" y="71.6" width="7.0" height="5.9"/><rect x="-62.0" y="78.5" width="7.0" height="6.9"/><rect x="-62.0" y="86.4" width="7.0" height="8.0"/><rect x="-62.0" y="129.2" width="6.5" height="5.4"/><rect x="-62.0" y="135.6" width="6.8" height="6.0"/><rect x="-53.0" y="16.5" width="6.5" height="7.8"/><rect x="-53.0" y="96.8" width="7.5" height="7.6"/><rect x="-53.0" y="143.5" width="7.1" height="8.1"/><rect x="-53.0" y="161.8" width="7.4" height="8.9"/><rect x="-41.0" y="151.1" width="7.0" height="7.5"/><rect x="31.0" y="65.5" width="7.9" height="7.4"/><rect x="85.0" y="-14.3" width="7.7" height="5.2"/><rect x="115.0" y="142.5" width="8.3" height="8.5"/><rect x="115.0" y="152.0" width="8.2" height="8.4"/></g>
<g fill="#cfceca"><rect x="-230.0" y="22.1" width="8.2" height="7.5"/><rect x="-230.0" y="84.7" width="7.5" height="5.1"/><rect x="-221.0" y="90.6" width="7.3" height="7.3"/><rect x="-221.0" y="98.8" width="8.6" height="7.1"/><rect x="-209.0" y="111.3" width="7.5" height="5.3"/><rect x="-200.0" y="78.2" width="6.9" height="6.6"/><rect x="-200.0" y="85.9" width="7.8" height="7.1"/><rect x="-200.0" y="155.8" width="6.8" height="5.5"/><rect x="-200.0" y="190.1" width="6.6" height="7.5"/><rect x="-179.0" y="149.3" width="7.9" height="6.7"/><rect x="-167.0" y="198.1" width="6.8" height="5.8"/><rect x="-116.0" y="6.9" width="7.5" height="6.1"/><rect x="-95.0" y="60.1" width="7.4" height="6.5"/><rect x="-95.0" y="99.1" width="6.8" height="5.7"/><rect x="-95.0" y="172.4" width="7.0" height="5.8"/><rect x="-53.0" y="137.2" width="7.8" height="5.2"/><rect x="-41.0" y="136.8" width="8.1" height="5.7"/><rect x="-32.0" y="188.0" width="8.4" height="7.5"/><rect x="10.0" y="-13.4" width="8.1" height="7.3"/><rect x="115.0" y="125.1" width="7.3" height="7.8"/><rect x="115.0" y="133.9" width="6.5" height="7.6"/></g>
<g fill="#a09d98"><rect x="-230.0" y="37.5" width="7.0" height="7.2"/><rect x="-221.0" y="52.2" width="6.5" height="7.9"/><rect x="-221.0" y="61.2" width="8.1" height="5.3"/><rect x="-221.0" y="149.3" width="7.8" height="6.8"/><rect x="-209.0" y="104.0" width="6.5" height="6.3"/><rect x="-209.0" y="156.6" width="7.2" height="8.8"/><rect x="-200.0" y="198.6" width="6.9" height="8.4"/><rect x="-188.0" y="195.2" width="6.8" height="6.6"/><rect x="-158.0" y="-10.0" width="7.7" height="8.8"/><rect x="-158.0" y="82.8" width="7.5" height="6.6"/><rect x="-146.0" y="31.0" width="7.1" height="8.7"/><rect x="-146.0" y="40.8" width="8.5" height="8.7"/><rect x="-146.0" y="78.7" width="8.5" height="7.8"/><rect x="-146.0" y="120.6" width="8.2" height="6.1"/><rect x="-116.0" y="52.0" width="7.1" height="6.1"/><rect x="-104.0" y="53.4" width="8.3" height="9.0"/><rect x="-104.0" y="72.3" width="7.3" height="7.7"/><rect x="-95.0" y="-9.9" width="8.6" height="5.5"/><rect x="-95.0" y="50.9" width="7.6" height="8.3"/><rect x="-74.0" y="25.8" width="6.8" height="8.1"/><rect x="-74.0" y="82.3" width="7.9" height="6.6"/><rect x="-74.0" y="97.5" width="6.5" height="6.3"/><rect x="-53.0" y="48.6" width="7.1" height="5.5"/><rect x="-53.0" y="129.5" width="8.5" height="6.8"/><rect x="-41.0" y="159.6" width="6.9" height="7.4"/><rect x="-32.0" y="78.2" width="8.2" height="7.2"/><rect x="-11.0" y="-16.9" width="7.2" height="8.8"/><rect x="22.0" y="63.3" width="7.2" height="7.2"/><rect x="73.0" y="-14.6" width="7.8" height="8.2"/><rect x="106.0" y="101.4" width="7.4" height="7.9"/></g>
<g fill="#52504c"><rect x="-230.0" y="45.7" width="7.0" height="6.7"/><rect x="-209.0" y="78.7" width="8.5" height="7.8"/><rect x="-188.0" y="99.3" width="6.7" height="6.3"/><rect x="-188.0" y="122.8" width="6.5" height="6.9"/><rect x="-188.0" y="138.1" width="8.5" height="5.3"/><rect x="-179.0" y="141.3" width="8.6" height="7.0"/><rect x="-179.0" y="186.8" width="8.4" height="7.9"/><rect x="-167.0" y="192.1" width="6.7" height="5.0"/><rect x="-146.0" y="15.3" width="6.9" height="8.7"/><rect x="-146.0" y="70.4" width="7.4" height="7.3"/><rect x="-146.0" y="205.9" width="6.8" height="7.6"/><rect x="-116.0" y="67.3" width="6.6" height="8.7"/><rect x="-116.0" y="103.1" width="8.3" height="8.5"/><rect x="-104.0" y="96.2" width="6.5" height="6.8"/><rect x="-104.0" y="111.5" width="7.4" height="6.2"/><rect x="-104.0" y="129.6" width="7.9" height="7.9"/><rect x="-95.0" y="113.2" width="7.5" height="7.0"/><rect x="-95.0" y="129.5" width="8.0" height="7.0"/><rect x="-95.0" y="163.4" width="7.0" height="8.0"/><rect x="-74.0" y="-12.1" width="8.1" height="6.0"/><rect x="-74.0" y="50.1" width="7.0" height="6.5"/><rect x="-62.0" y="110.0" width="8.0" height="7.3"/><rect x="-53.0" y="82.1" width="8.6" height="7.6"/><rect x="-53.0" y="105.3" width="6.6" height="8.1"/></g>
<g fill="#b86e4c"><rect x="-230.0" y="53.5" width="7.4" height="6.1"/><rect x="-209.0" y="71.1" width="8.2" height="6.6"/><rect x="-209.0" y="96.3" width="6.6" height="6.7"/><rect x="-200.0" y="162.3" width="6.6" height="7.5"/><rect x="-200.0" y="170.8" width="6.5" height="7.9"/><rect x="-188.0" y="82.9" width="7.8" height="5.7"/><rect x="-188.0" y="89.6" width="7.6" height="8.7"/><rect x="-188.0" y="106.5" width="8.6" height="6.2"/><rect x="-179.0" y="110.2" width="7.9" height="7.5"/><rect x="-167.0" y="78.9" width="8.2" height="5.8"/><rect x="-167.0" y="94.9" width="6.6" height="6.6"/><rect x="-167.0" y="186.1" width="7.2" height="5.1"/><rect x="-158.0" y="66.6" width="8.0" height="5.4"/><rect x="-158.0" y="100.4" width="6.6" height="7.9"/><rect x="-158.0" y="109.3" width="8.4" height="7.0"/><rect x="-158.0" y="194.9" width="7.1" height="5.9"/><rect x="-137.0" y="6.0" width="6.7" height="8.4"/><rect x="-137.0" y="48.0" width="7.7" height="7.0"/><rect x="-137.0" y="75.9" width="6.9" height="5.5"/><rect x="-137.0" y="90.7" width="7.4" height="8.9"/><rect x="-125.0" y="-15.1" width="7.2" height="6.0"/><rect x="-125.0" y="16.2" width="8.5" height="7.1"/><rect x="-125.0" y="33.7" width="7.0" height="6.5"/><rect x="-125.0" y="75.4" width="7.3" height="5.5"/><rect x="-125.0" y="105.3" width="7.9" height="5.5"/><rect x="-116.0" y="-11.1" width="7.6" height="7.6"/><rect x="-116.0" y="28.8" width="7.0" height="6.5"/><rect x="-116.0" y="76.9" width="7.8" height="7.8"/><rect x="-104.0" y="-15.4" width="8.2" height="8.9"/><rect x="-104.0" y="28.8" width="7.0" height="6.6"/><rect x="-104.0" y="46.0" width="7.9" height="6.4"/><rect x="-95.0" y="26.2" width="7.4" height="7.2"/><rect x="-83.0" y="140.7" width="6.7" height="7.9"/><rect x="-74.0" y="2.5" width="7.9" height="5.8"/><rect x="-74.0" y="104.8" width="8.2" height="5.6"/><rect x="-74.0" y="128.0" width="7.7" height="5.1"/><rect x="-62.0" y="39.0" width="8.5" height="5.1"/><rect x="-62.0" y="151.9" width="6.6" height="8.0"/><rect x="-53.0" y="31.7" width="8.3" height="8.0"/><rect x="-41.0" y="168.1" width="7.6" height="7.4"/><rect x="1.0" y="69.7" width="7.7" height="7.0"/><rect x="10.0" y="67.9" width="6.7" height="5.5"/><rect x="31.0" y="-14.7" width="8.0" height="7.6"/><rect x="43.0" y="-13.9" width="7.3" height="5.8"/><rect x="106.0" y="129.4" width="7.0" height="7.3"/><rect x="115.0" y="161.4" width="7.0" height="5.8"/></g>
<g fill="#827e79"><rect x="-230.0" y="60.5" width="7.6" height="7.3"/><rect x="-230.0" y="96.9" width="8.5" height="6.3"/><rect x="-230.0" y="104.1" width="8.4" height="8.4"/><rect x="-221.0" y="-15.7" width="6.8" height="6.9"/><rect x="-221.0" y="67.4" width="8.2" height="5.9"/><rect x="-221.0" y="82.5" width="7.4" height="7.1"/><rect x="-209.0" y="127.1" width="7.0" height="5.6"/><rect x="-209.0" y="149.2" width="7.6" height="6.4"/><rect x="-200.0" y="110.6" width="6.5" height="5.7"/><rect x="-200.0" y="134.0" width="8.4" height="6.7"/><rect x="-200.0" y="149.5" width="8.1" height="5.3"/><rect x="-188.0" y="185.5" width="7.7" height="8.7"/><rect x="-179.0" y="76.6" width="8.4" height="8.0"/><rect x="-179.0" y="134.9" width="7.8" height="5.4"/><rect x="-167.0" y="-16.2" width="6.7" height="8.1"/><rect x="-146.0" y="50.5" width="7.4" height="8.1"/><rect x="-146.0" y="104.1" width="6.9" height="6.3"/><rect x="-137.0" y="108.9" width="8.1" height="6.8"/><rect x="-125.0" y="-8.1" width="7.4" height="5.5"/><rect x="-125.0" y="49.3" width="7.6" height="6.9"/><rect x="-116.0" y="85.7" width="7.6" height="7.0"/><rect x="-116.0" y="93.7" width="7.7" height="8.4"/><rect x="-116.0" y="112.6" width="8.5" height="6.6"/><rect x="-104.0" y="104.1" width="8.0" height="6.4"/><rect x="-83.0" y="-16.5" width="8.2" height="6.8"/><rect x="-83.0" y="8.0" width="7.2" height="8.0"/><rect x="-83.0" y="34.0" width="7.4" height="8.1"/><rect x="-83.0" y="83.9" width="7.9" height="7.1"/><rect x="-83.0" y="110.3" width="7.9" height="6.1"/><rect x="-83.0" y="162.5" width="6.5" height="6.7"/><rect x="-74.0" y="89.9" width="6.8" height="6.6"/><rect x="-62.0" y="45.0" width="8.5" height="7.6"/><rect x="-62.0" y="95.4" width="6.6" height="6.7"/><rect x="-53.0" y="40.7" width="6.7" height="6.9"/><rect x="-53.0" y="66.0" width="8.5" height="5.9"/><rect x="-53.0" y="122.8" width="6.7" height="5.7"/><rect x="-53.0" y="152.6" width="7.7" height="8.2"/><rect x="43.0" y="64.4" width="8.1" height="8.3"/><rect x="106.0" y="110.3" width="7.3" height="8.3"/><rect x="106.0" y="137.7" width="7.0" height="8.5"/></g>
<g fill="#485a35"><rect x="-230.0" y="68.8" width="6.6" height="8.8"/><rect x="-209.0" y="87.5" width="8.4" height="7.8"/><rect x="-209.0" y="141.4" width="7.1" height="6.8"/><rect x="-179.0" y="85.5" width="7.6" height="7.6"/><rect x="-158.0" y="90.4" width="8.3" height="9.0"/><rect x="-158.0" y="125.3" width="7.2" height="5.3"/><rect x="-146.0" y="9.0" width="8.5" height="5.3"/><rect x="-146.0" y="25.0" width="7.8" height="5.1"/><rect x="-137.0" y="100.6" width="7.7" height="7.3"/><rect x="-125.0" y="24.3" width="7.0" height="8.4"/><rect x="-125.0" y="66.4" width="6.9" height="8.0"/><rect x="-125.0" y="97.1" width="8.3" height="7.2"/><rect x="-95.0" y="34.4" width="8.1" height="6.9"/><rect x="-83.0" y="132.5" width="7.0" height="7.2"/><rect x="-83.0" y="170.1" width="7.1" height="5.3"/><rect x="-74.0" y="111.4" width="6.9" height="5.4"/><rect x="-62.0" y="-14.5" width="8.4" height="8.3"/><rect x="-62.0" y="13.5" width="7.2" height="7.1"/><rect x="-62.0" y="21.7" width="6.5" height="8.3"/><rect x="-41.0" y="143.5" width="7.9" height="6.6"/><rect x="-41.0" y="183.6" width="8.4" height="7.2"/><rect x="-11.0" y="162.3" width="7.2" height="6.8"/></g>
<g fill="#8e573e"><rect x="-221.0" y="123.5" width="7.8" height="7.6"/><rect x="-188.0" y="144.4" width="8.1" height="7.1"/><rect x="-179.0" y="167.0" width="6.9" height="8.3"/><rect x="-137.0" y="15.4" width="7.4" height="5.3"/><rect x="-137.0" y="31.6" width="7.3" height="7.7"/><rect x="-137.0" y="66.0" width="7.8" height="8.9"/><rect x="-137.0" y="82.3" width="8.3" height="7.3"/><rect x="-125.0" y="41.1" width="7.1" height="7.1"/><rect x="-125.0" y="81.9" width="7.1" height="5.8"/><rect x="-125.0" y="121.5" width="8.3" height="6.6"/><rect x="-116.0" y="14.0" width="7.6" height="6.0"/><rect x="-116.0" y="21.0" width="7.7" height="6.7"/><rect x="-116.0" y="120.2" width="7.7" height="7.1"/><rect x="-104.0" y="36.4" width="8.2" height="8.6"/><rect x="-104.0" y="80.9" width="8.1" height="7.8"/><rect x="-104.0" y="170.5" width="6.6" height="7.5"/><rect x="-95.0" y="84.4" width="8.4" height="7.5"/><rect x="-95.0" y="121.2" width="7.8" height="7.3"/><rect x="-83.0" y="67.5" width="7.0" height="6.7"/><rect x="-83.0" y="75.1" width="6.8" height="7.7"/><rect x="-74.0" y="41.3" width="8.6" height="7.8"/><rect x="-74.0" y="152.2" width="7.1" height="6.0"/><rect x="-74.0" y="192.4" width="7.1" height="8.1"/><rect x="-62.0" y="63.6" width="7.6" height="7.1"/><rect x="-62.0" y="103.0" width="8.2" height="6.0"/><rect x="-62.0" y="142.6" width="7.5" height="8.2"/><rect x="-53.0" y="25.3" width="6.6" height="5.3"/><rect x="-11.0" y="71.1" width="7.7" height="5.4"/><rect x="106.0" y="95.1" width="6.9" height="5.3"/></g>
</g>
<g transform="translate(760 420) rotate(45)">
<g fill="#8e573e"><rect x="-41.0" y="85.9" width="7.7" height="5.6"/><rect x="-41.0" y="109.0" width="7.0" height="6.7"/><rect x="-32.0" y="104.7" width="8.4" height="7.0"/><rect x="-11.0" y="93.8" width="8.1" height="8.6"/><rect x="1.0" y="-22.3" width="7.2" height="5.6"/><rect x="10.0" y="-35.8" width="7.4" height="6.9"/><rect x="10.0" y="99.8" width="8.5" height="5.4"/><rect x="10.0" y="106.2" width="7.7" height="7.2"/><rect x="22.0" y="78.7" width="7.9" height="8.5"/><rect x="22.0" y="95.5" width="7.4" height="7.5"/><rect x="31.0" y="63.0" width="7.3" height="5.4"/><rect x="43.0" y="-78.0" width="7.1" height="7.7"/><rect x="52.0" y="9.2" width="7.3" height="5.5"/><rect x="52.0" y="23.9" width="8.1" height="7.0"/><rect x="52.0" y="60.4" width="8.0" height="8.9"/><rect x="52.0" y="92.7" width="7.1" height="8.0"/><rect x="64.0" y="-73.1" width="8.1" height="6.2"/><rect x="73.0" y="-70.4" width="6.6" height="7.7"/><rect x="73.0" y="-20.2" width="6.5" height="8.6"/><rect x="73.0" y="142.3" width="8.3" height="7.0"/></g>
<g fill="#52504c"><rect x="-41.0" y="92.5" width="7.5" height="6.1"/><rect x="-32.0" y="81.8" width="8.0" height="5.4"/><rect x="-20.0" y="78.7" width="8.2" height="7.4"/><rect x="10.0" y="76.3" width="7.0" height="6.8"/><rect x="22.0" y="-73.8" width="6.6" height="8.9"/><rect x="31.0" y="-82.2" width="8.3" height="5.8"/><rect x="31.0" y="-75.4" width="6.7" height="5.3"/><rect x="43.0" y="-69.3" width="6.5" height="7.6"/><rect x="43.0" y="-45.4" width="7.0" height="6.1"/><rect x="52.0" y="50.7" width="7.3" height="8.7"/><rect x="52.0" y="101.7" width="6.8" height="7.8"/><rect x="64.0" y="137.6" width="8.1" height="8.6"/><rect x="73.0" y="-77.1" width="7.9" height="5.7"/></g>
<g fill="#485a35"><rect x="-41.0" y="99.5" width="7.3" height="8.5"/><rect x="-32.0" y="74.7" width="6.6" height="6.1"/><rect x="-20.0" y="96.1" width="8.0" height="5.0"/><rect x="-20.0" y="102.1" width="8.4" height="6.1"/><rect x="1.0" y="10.1" width="8.4" height="7.9"/><rect x="10.0" y="-101.1" width="6.5" height="5.4"/><rect x="10.0" y="30.6" width="7.3" height="8.5"/><rect x="22.0" y="88.2" width="7.2" height="6.3"/><rect x="31.0" y="94.4" width="6.6" height="8.2"/><rect x="43.0" y="86.8" width="7.2" height="5.5"/><rect x="52.0" y="-75.3" width="6.6" height="6.4"/><rect x="52.0" y="-21.1" width="6.8" height="8.0"/><rect x="64.0" y="45.6" width="8.0" height="8.1"/><rect x="64.0" y="127.9" width="7.1" height="8.7"/><rect x="64.0" y="154.2" width="8.2" height="5.5"/><rect x="73.0" y="25.3" width="7.1" height="8.5"/><rect x="73.0" y="150.4" width="7.7" height="6.4"/></g>
<g fill="#cfceca"><rect x="-32.0" y="66.2" width="6.7" height="7.5"/><rect x="-32.0" y="112.8" width="8.2" height="8.8"/><rect x="1.0" y="-15.7" width="6.9" height="7.5"/><rect x="1.0" y="96.2" width="7.1" height="8.7"/><rect x="10.0" y="5.9" width="7.3" height="8.6"/><rect x="22.0" y="-20.0" width="6.5" height="6.4"/><rect x="22.0" y="9.4" width="6.7" height="5.4"/><rect x="31.0" y="-95.2" width="7.4" height="5.6"/><rect x="31.0" y="-40.1" width="8.3" height="8.0"/><rect x="31.0" y="29.4" width="7.2" height="7.5"/><rect x="31.0" y="45.7" width="8.1" height="7.3"/><rect x="43.0" y="-14.5" width="8.0" height="7.1"/><rect x="43.0" y="52.2" width="7.8" height="6.6"/><rect x="52.0" y="-90.1" width="6.7" height="5.5"/><rect x="52.0" y="-28.4" width="8.2" height="6.3"/><rect x="52.0" y="31.9" width="7.5" height="8.2"/><rect x="64.0" y="-82.4" width="8.3" height="8.3"/><rect x="64.0" y="19.5" width="7.0" height="8.0"/><rect x="73.0" y="6.8" width="7.5" height="8.4"/><rect x="73.0" y="52.1" width="6.6" height="8.4"/></g>
<g fill="#a09d98"><rect x="-32.0" y="88.2" width="7.6" height="8.7"/><rect x="-20.0" y="87.1" width="7.8" height="8.0"/><rect x="1.0" y="2.6" width="6.9" height="6.4"/><rect x="1.0" y="50.8" width="7.1" height="5.6"/><rect x="10.0" y="-69.2" width="7.2" height="6.3"/><rect x="10.0" y="-27.9" width="8.3" height="5.1"/><rect x="10.0" y="93.7" width="8.4" height="5.1"/><rect x="22.0" y="3.2" width="8.2" height="5.2"/><rect x="22.0" y="22.7" width="6.6" height="5.3"/><rect x="31.0" y="8.0" width="6.8" height="6.1"/><rect x="43.0" y="1.9" width="6.9" height="8.2"/><rect x="43.0" y="45.0" width="8.4" height="6.2"/><rect x="52.0" y="-97.1" width="8.0" height="5.9"/><rect x="52.0" y="-83.6" width="7.0" height="7.3"/><rect x="64.0" y="-56.3" width="7.4" height="7.3"/><rect x="64.0" y="-41.8" width="7.0" height="8.2"/><rect x="73.0" y="-51.6" width="6.6" height="7.2"/><rect x="73.0" y="34.8" width="8.1" height="8.5"/><rect x="73.0" y="99.4" width="8.5" height="8.1"/><rect x="73.0" y="157.8" width="6.8" height="7.1"/></g>
<g fill="#a85d3d"><rect x="-32.0" y="97.9" width="8.1" height="5.8"/><rect x="-11.0" y="60.7" width="7.2" height="8.2"/><rect x="-11.0" y="103.4" width="8.4" height="6.8"/><rect x="1.0" y="-40.7" width="8.1" height="8.1"/><rect x="1.0" y="19.0" width="6.5" height="8.4"/><rect x="1.0" y="28.4" width="7.5" height="5.3"/><rect x="1.0" y="41.5" width="8.1" height="8.3"/><rect x="1.0" y="105.8" width="7.2" height="8.9"/><rect x="10.0" y="-85.7" width="8.3" height="8.4"/><rect x="10.0" y="-76.3" width="7.4" height="6.1"/><rect x="10.0" y="-43.0" width="7.3" height="6.2"/><rect x="22.0" y="-90.1" width="7.1" height="8.9"/><rect x="22.0" y="-80.2" width="7.0" height="5.4"/><rect x="22.0" y="15.8" width="8.2" height="6.0"/><rect x="22.0" y="36.9" width="7.9" height="8.6"/><rect x="22.0" y="62.6" width="8.1" height="8.3"/><rect x="22.0" y="71.9" width="7.8" height="5.8"/><rect x="31.0" y="-48.5" width="6.8" height="7.4"/><rect x="31.0" y="-31.1" width="8.5" height="6.4"/><rect x="31.0" y="-23.8" width="7.8" height="5.3"/><rect x="31.0" y="-17.5" width="6.8" height="6.9"/><rect x="31.0" y="-9.6" width="7.2" height="6.3"/><rect x="31.0" y="22.4" width="7.5" height="6.0"/><rect x="31.0" y="37.9" width="7.8" height="6.7"/><rect x="31.0" y="53.9" width="6.8" height="8.1"/><rect x="31.0" y="103.5" width="6.9" height="6.1"/><rect x="31.0" y="110.7" width="7.9" height="7.0"/><rect x="43.0" y="-93.9" width="7.6" height="7.2"/><rect x="43.0" y="-85.7" width="8.5" height="6.7"/><rect x="43.0" y="-24.5" width="6.8" height="8.9"/><rect x="43.0" y="19.5" width="7.3" height="7.7"/><rect x="43.0" y="28.2" width="8.1" height="6.0"/><rect x="43.0" y="35.2" width="8.2" height="8.8"/><rect x="43.0" y="77.0" width="6.8" height="8.8"/><rect x="43.0" y="103.2" width="7.0" height="5.7"/><rect x="43.0" y="109.9" width="7.8" height="6.3"/><rect x="43.0" y="132.7" width="6.9" height="6.6"/><rect x="52.0" y="-67.9" width="7.1" height="5.7"/><rect x="52.0" y="-51.3" width="8.2" height="5.3"/><rect x="52.0" y="-12.1" width="6.6" height="6.5"/><rect x="52.0" y="15.7" width="8.2" height="7.2"/><rect x="52.0" y="41.1" width="6.9" height="8.6"/><rect x="52.0" y="76.4" width="6.7" height="6.6"/><rect x="64.0" y="-48.0" width="7.4" height="5.3"/><rect x="64.0" y="-32.6" width="8.1" height="7.8"/><rect x="64.0" y="-23.7" width="8.1" height="5.4"/><rect x="64.0" y="-17.3" width="8.2" height="8.7"/><rect x="64.0" y="28.5" width="8.4" height="8.4"/><rect x="64.0" y="74.4" width="7.7" height="5.7"/><rect x="64.0" y="81.1" width="8.6" height="7.4"/><rect x="64.0" y="89.5" width="6.8" height="5.4"/><rect x="64.0" y="101.9" width="7.7" height="7.9"/><rect x="64.0" y="110.8" width="8.2" height="6.6"/><rect x="73.0" y="-84.1" width="6.9" height="6.1"/><rect x="73.0" y="-43.4" width="6.6" height="5.6"/><rect x="73.0" y="-36.8" width="8.5" height="6.4"/><rect x="73.0" y="-29.4" width="7.0" height="8.2"/><rect x="73.0" y="-10.6" width="6.8" height="7.4"/><rect x="73.0" y="69.6" width="8.3" height="5.7"/><rect x="73.0" y="126.4" width="6.9" height="6.2"/></g>
<g fill="#827e79"><rect x="-20.0" y="109.2" width="6.6" height="5.0"/><rect x="1.0" y="-31.6" width="6.8" height="8.3"/><rect x="10.0" y="-50.9" width="8.3" height="6.9"/><rect x="10.0" y="-21.8" width="7.4" height="6.9"/><rect x="10.0" y="-13.9" width="7.3" height="8.7"/><rect x="10.0" y="40.1" width="6.8" height="6.6"/><rect x="10.0" y="47.7" width="7.9" height="8.4"/><rect x="10.0" y="84.0" width="6.7" height="8.6"/><rect x="22.0" y="-55.0" width="7.1" height="7.7"/><rect x="22.0" y="-29.3" width="8.3" height="8.3"/><rect x="22.0" y="29.1" width="8.5" height="6.8"/><rect x="31.0" y="-69.1" width="7.6" height="6.0"/><rect x="31.0" y="15.1" width="6.5" height="6.4"/><rect x="31.0" y="78.3" width="7.2" height="5.7"/><rect x="43.0" y="-53.0" width="7.9" height="6.6"/><rect x="43.0" y="-38.4" width="6.8" height="6.4"/><rect x="43.0" y="93.3" width="8.0" height="8.9"/><rect x="52.0" y="-45.0" width="7.8" height="7.7"/><rect x="52.0" y="-36.3" width="8.2" height="6.9"/><rect x="52.0" y="70.3" width="8.1" height="5.1"/><rect x="52.0" y="125.8" width="6.9" height="8.5"/><rect x="52.0" y="135.3" width="8.1" height="5.5"/><rect x="64.0" y="-91.8" width="6.8" height="8.4"/><rect x="64.0" y="-7.6" width="7.9" height="6.2"/><rect x="64.0" y="10.2" width="6.5" height="8.4"/><rect x="64.0" y="37.9" width="8.4" height="6.7"/><rect x="73.0" y="-91.4" width="6.7" height="6.2"/><rect x="73.0" y="16.2" width="6.7" height="8.1"/><rect x="73.0" y="61.6" width="7.7" height="7.0"/><rect x="73.0" y="76.3" width="6.6" height="7.4"/><rect x="73.0" y="133.6" width="8.4" height="7.7"/><rect x="73.0" y="165.9" width="8.2" height="7.6"/></g>
<g fill="#b86e4c"><rect x="-11.0" y="111.2" width="6.5" height="7.7"/><rect x="1.0" y="-88.5" width="8.1" height="7.1"/><rect x="1.0" y="-7.1" width="8.5" height="8.8"/><rect x="1.0" y="34.7" width="7.9" height="5.8"/><rect x="1.0" y="66.8" width="8.5" height="5.3"/><rect x="10.0" y="-94.7" width="8.0" height="8.0"/><rect x="10.0" y="66.9" width="7.7" height="8.4"/><rect x="22.0" y="-99.4" width="7.4" height="8.3"/><rect x="22.0" y="-39.1" width="8.5" height="8.8"/><rect x="22.0" y="-12.6" width="7.5" height="7.6"/><rect x="22.0" y="46.5" width="7.6" height="7.5"/><rect x="22.0" y="110.6" width="7.4" height="6.4"/><rect x="31.0" y="-88.6" width="7.5" height="5.5"/><rect x="31.0" y="-55.0" width="7.5" height="5.5"/><rect x="31.0" y="69.4" width="8.6" height="7.8"/><rect x="31.0" y="85.0" width="7.8" height="8.4"/><rect x="31.0" y="127.0" width="8.4" height="6.1"/><rect x="43.0" y="-30.9" width="6.7" height="5.5"/><rect x="43.0" y="-6.4" width="7.3" height="7.3"/><rect x="43.0" y="11.1" width="8.3" height="7.4"/><rect x="43.0" y="70.6" width="6.9" height="5.4"/><rect x="43.0" y="125.4" width="7.9" height="6.3"/><rect x="52.0" y="2.5" width="6.8" height="5.6"/><rect x="52.0" y="84.0" width="7.0" height="7.7"/><rect x="52.0" y="110.5" width="8.0" height="6.4"/><rect x="52.0" y="141.8" width="7.3" height="8.1"/><rect x="64.0" y="65.7" width="8.4" height="7.7"/><rect x="64.0" y="95.9" width="6.8" height="5.0"/><rect x="64.0" y="147.2" width="7.3" height="6.0"/><rect x="73.0" y="84.6" width="7.8" height="7.0"/><rect x="73.0" y="92.6" width="7.2" height="5.8"/><rect x="73.0" y="108.5" width="8.5" height="8.6"/></g>
</g>
<circle cx="630" cy="412" r="2.5" fill="#34472a"/>
<circle cx="546" cy="303" r="2.5" fill="#34472a"/>
<circle cx="510" cy="393" r="3" fill="#3e5530"/>
<circle cx="824" cy="378" r="3" fill="#3e5530"/>
<circle cx="504" cy="459" r="2" fill="#3e5530"/>
<circle cx="479" cy="416" r="2" fill="#3e5530"/>
<circle cx="857" cy="417" r="2" fill="#3e5530"/>
<circle cx="607" cy="327" r="2" fill="#3e5530"/>
<circle cx="561" cy="412" r="2" fill="#34472a"/>
<circle cx="562" cy="416" r="2.5" fill="#34472a"/>
<circle cx="551" cy="463" r="2.5" fill="#34472a"/>
<circle cx="748" cy="480" r="2.5" fill="#34472a"/>
<circle cx="742" cy="510" r="2.5" fill="#4d6538"/>
<circle cx="761" cy="446" r="2.5" fill="#34472a"/>
<circle cx="455" cy="363" r="2" fill="#3e5530"/>
<circle cx="588" cy="373" r="2" fill="#4d6538"/>
<circle cx="480" cy="305" r="2" fill="#34472a"/>
<circle cx="442" cy="347" r="3" fill="#4d6538"/>
<circle cx="842" cy="395" r="2" fill="#34472a"/>
<circle cx="542" cy="448" r="3" fill="#3e5530"/>
<circle cx="572" cy="350" r="3" fill="#4d6538"/>
<circle cx="712" cy="496" r="2.5" fill="#3e5530"/>
<circle cx="752" cy="443" r="2.5" fill="#34472a"/>
<circle cx="731" cy="515" r="2.5" fill="#4d6538"/>
<circle cx="732" cy="517" r="2" fill="#3e5530"/>
<circle cx="734" cy="454" r="2" fill="#34472a"/>
<circle cx="677" cy="426" r="2.5" fill="#3e5530"/>
<circle cx="668" cy="332" r="3" fill="#4d6538"/>
<circle cx="864" cy="423" r="3" fill="#4d6538"/>
<circle cx="667" cy="332" r="2" fill="#34472a"/>
<circle cx="718" cy="464" r="3" fill="#4d6538"/>
<circle cx="822" cy="378" r="2" fill="#34472a"/>
<circle cx="574" cy="270" r="2" fill="#34472a"/>
<circle cx="704" cy="520" r="2.5" fill="#3e5530"/>
<circle cx="681" cy="430" r="2.5" fill="#4d6538"/>
<circle cx="590" cy="328" r="2.5" fill="#4d6538"/>
<circle cx="599" cy="317" r="2" fill="#4d6538"/>
<circle cx="809" cy="326" r="3" fill="#4d6538"/>
<circle cx="711" cy="468" r="2.5" fill="#4d6538"/>
<circle cx="648" cy="490" r="2.5" fill="#3e5530"/>
<circle cx="742" cy="499" r="2.5" fill="#3e5530"/>
<circle cx="698" cy="431" r="2.5" fill="#4d6538"/>
<circle cx="545" cy="374" r="2.5" fill="#4d6538"/>
<circle cx="632" cy="416" r="3" fill="#34472a"/>
<circle cx="593" cy="359" r="2" fill="#4d6538"/>
<circle cx="739" cy="531" r="3" fill="#4d6538"/>
<circle cx="788" cy="503" r="3" fill="#3e5530"/>
<circle cx="613" cy="374" r="3" fill="#4d6538"/>
<circle cx="849" cy="374" r="3" fill="#3e5530"/>
<circle cx="734" cy="476" r="3" fill="#4d6538"/>
<circle cx="791" cy="320" r="2" fill="#3e5530"/>
<circle cx="768" cy="419" r="3" fill="#34472a"/>
<circle cx="484" cy="399" r="2" fill="#34472a"/>
<circle cx="528" cy="336" r="3" fill="#4d6538"/>
<circle cx="727" cy="452" r="2.5" fill="#34472a"/>
<circle cx="573" cy="345" r="2.5" fill="#3e5530"/>
<circle cx="604" cy="398" r="3" fill="#4d6538"/>
<circle cx="836" cy="379" r="2.5" fill="#3e5530"/>
<circle cx="824" cy="385" r="2.5" fill="#4d6538"/>
<circle cx="858" cy="438" r="3" fill="#4d6538"/>
<circle cx="542" cy="375" r="3" fill="#34472a"/>
<circle cx="507" cy="296" r="3" fill="#4d6538"/>
<circle cx="433" cy="343" r="2" fill="#34472a"/>
<circle cx="534" cy="436" r="2.5" fill="#3e5530"/>
<circle cx="748" cy="504" r="3" fill="#4d6538"/>
<circle cx="610" cy="404" r="3" fill="#4d6538"/>
<circle cx="489" cy="426" r="2" fill="#34472a"/>
<circle cx="648" cy="340" r="2.5" fill="#34472a"/>
<circle cx="516" cy="305" r="2.5" fill="#34472a"/>
<circle cx="657" cy="420" r="2" fill="#3e5530"/>
<circle cx="814" cy="417" r="3" fill="#3e5530"/>
<circle cx="519" cy="323" r="2.5" fill="#4d6538"/>
<circle cx="789" cy="457" r="2.5" fill="#34472a"/>
<circle cx="511" cy="468" r="2" fill="#4d6538"/>
<circle cx="608" cy="396" r="3" fill="#34472a"/>
<polygon points="548,515 655,488 690,515 695,585 686,610 600,568 592,562" fill="#5f5d57"/>
<circle cx="668" cy="557" r="4" fill="#5a7445"/>
<circle cx="621" cy="554" r="2" fill="#4f6a3a"/>
<circle cx="640" cy="560" r="4" fill="#3a5230"/>
<circle cx="591" cy="542" r="4" fill="#3a5230"/>
<circle cx="603" cy="506" r="4" fill="#3a5230"/>
<circle cx="578" cy="530" r="2" fill="#5a7445"/>
<circle cx="591" cy="554" r="2" fill="#3a5230"/>
<circle cx="642" cy="497" r="3" fill="#5a7445"/>
<rect x="595" y="516" width="8" height="6" fill="#c9c8c4" transform="rotate(35 595 516)"/>
<circle cx="652" cy="502" r="3" fill="#5a7445"/>
<circle cx="601" cy="528" r="2" fill="#3a5230"/>
<circle cx="647" cy="558" r="2" fill="#5a7445"/>
<circle cx="661" cy="512" r="4" fill="#3a5230"/>
<circle cx="661" cy="520" r="4" fill="#5a7445"/>
<circle cx="678" cy="565" r="4" fill="#2f4428"/>
<circle cx="692" cy="538" r="4" fill="#3a5230"/>
<circle cx="645" cy="590" r="2" fill="#4f6a3a"/>
<circle cx="671" cy="565" r="4" fill="#5a7445"/>
<circle cx="630" cy="523" r="2" fill="#3a5230"/>
<circle cx="666" cy="571" r="2" fill="#5a7445"/>
<rect x="678" y="512" width="4" height="4" fill="#7a7772" transform="rotate(35 678 512)"/>
<circle cx="676" cy="528" r="2" fill="#4f6a3a"/>
<circle cx="646" cy="569" r="2" fill="#5a7445"/>
<circle cx="628" cy="547" r="2" fill="#5a7445"/>
<circle cx="643" cy="558" r="4" fill="#5a7445"/>
<circle cx="566" cy="527" r="2" fill="#3a5230"/>
<circle cx="653" cy="567" r="4" fill="#3a5230"/>
<circle cx="654" cy="537" r="2" fill="#2f4428"/>
<circle cx="676" cy="597" r="4" fill="#5a7445"/>
<circle cx="631" cy="537" r="3" fill="#3a5230"/>
<circle cx="672" cy="596" r="3" fill="#2f4428"/>
<circle cx="639" cy="534" r="3" fill="#5a7445"/>
<circle cx="605" cy="534" r="4" fill="#2f4428"/>
<circle cx="618" cy="571" r="3" fill="#2f4428"/>
<circle cx="640" cy="493" r="2" fill="#4f6a3a"/>
<circle cx="639" cy="576" r="2" fill="#3a5230"/>
<circle cx="680" cy="599" r="4" fill="#3a5230"/>
<circle cx="566" cy="526" r="2" fill="#4f6a3a"/>
<circle cx="619" cy="523" r="2" fill="#2f4428"/>
<circle cx="679" cy="527" r="4" fill="#5a7445"/>
<circle cx="648" cy="563" r="4" fill="#3a5230"/>
<circle cx="616" cy="505" r="3" fill="#4f6a3a"/>
<circle cx="562" cy="516" r="4" fill="#3a5230"/>
<circle cx="671" cy="583" r="3" fill="#4f6a3a"/>
<circle cx="597" cy="504" r="2" fill="#2f4428"/>
<circle cx="667" cy="530" r="3" fill="#4f6a3a"/>
<circle cx="577" cy="533" r="3" fill="#4f6a3a"/>
<circle cx="580" cy="516" r="2" fill="#4f6a3a"/>
<rect x="616" y="560" width="6" height="5" fill="#9c9a96" transform="rotate(35 616 560)"/>
<circle cx="680" cy="561" r="2" fill="#5a7445"/>
<circle cx="664" cy="543" r="2" fill="#3a5230"/>
<circle cx="653" cy="573" r="3" fill="#5a7445"/>
<circle cx="595" cy="550" r="4" fill="#3a5230"/>
<circle cx="596" cy="516" r="2" fill="#3a5230"/>
<circle cx="653" cy="539" r="4" fill="#3a5230"/>
<circle cx="597" cy="561" r="3" fill="#3a5230"/>
<circle cx="660" cy="524" r="2" fill="#4f6a3a"/>
<circle cx="644" cy="559" r="2" fill="#5a7445"/>
<circle cx="659" cy="593" r="2" fill="#4f6a3a"/>
<circle cx="612" cy="517" r="2" fill="#5a7445"/>
<circle cx="681" cy="521" r="3" fill="#4f6a3a"/>
<circle cx="651" cy="512" r="4" fill="#5a7445"/>
<circle cx="631" cy="544" r="3" fill="#5a7445"/>
<circle cx="654" cy="533" r="3" fill="#3a5230"/>
<circle cx="623" cy="503" r="4" fill="#3a5230"/>
<circle cx="648" cy="550" r="4" fill="#2f4428"/>
<circle cx="606" cy="524" r="2" fill="#4f6a3a"/>
<circle cx="617" cy="519" r="3" fill="#4f6a3a"/>
<circle cx="662" cy="530" r="2" fill="#3a5230"/>
<circle cx="620" cy="533" r="4" fill="#5a7445"/>
<circle cx="667" cy="557" r="2" fill="#2f4428"/>
<circle cx="664" cy="523" r="3" fill="#2f4428"/>
<circle cx="634" cy="555" r="2" fill="#2f4428"/>
<circle cx="598" cy="559" r="4" fill="#3a5230"/>
<rect x="664" y="528" width="7" height="6" fill="#9c9a96" transform="rotate(35 664 528)"/>
<circle cx="682" cy="588" r="4" fill="#4f6a3a"/>
<circle cx="589" cy="527" r="2" fill="#3a5230"/>
<circle cx="664" cy="580" r="3" fill="#2f4428"/>
<circle cx="679" cy="541" r="2" fill="#4f6a3a"/>
<circle cx="654" cy="579" r="3" fill="#3a5230"/>
<circle cx="609" cy="529" r="4" fill="#2f4428"/>
<rect x="614" y="540" width="4" height="6" fill="#c9c8c4" transform="rotate(35 614 540)"/>
<circle cx="602" cy="561" r="2" fill="#5a7445"/>
<circle cx="690" cy="548" r="3" fill="#3a5230"/>
<circle cx="627" cy="532" r="4" fill="#2f4428"/>
<circle cx="576" cy="535" r="4" fill="#3a5230"/>
<circle cx="620" cy="520" r="4" fill="#2f4428"/>
<circle cx="624" cy="500" r="4" fill="#3a5230"/>
<circle cx="603" cy="512" r="4" fill="#4f6a3a"/>
<circle cx="659" cy="576" r="4" fill="#3a5230"/>
<circle cx="607" cy="552" r="3" fill="#5a7445"/>
<rect x="603" y="547" width="8" height="4" fill="#c9c8c4" transform="rotate(35 603 547)"/>
<circle cx="653" cy="572" r="3" fill="#4f6a3a"/>
<circle cx="625" cy="542" r="4" fill="#2f4428"/>
<rect x="587" y="538" width="7" height="7" fill="#c9c8c4" transform="rotate(35 587 538)"/>
<circle cx="604" cy="501" r="2" fill="#5a7445"/>
<circle cx="656" cy="555" r="2" fill="#4f6a3a"/>
<circle cx="630" cy="518" r="3" fill="#2f4428"/>
<circle cx="593" cy="515" r="4" fill="#4f6a3a"/>
<circle cx="629" cy="574" r="2" fill="#2f4428"/>
<circle cx="604" cy="550" r="3" fill="#2f4428"/>
<circle cx="644" cy="578" r="2" fill="#5a7445"/>
<rect x="592" y="539" width="4" height="6" fill="#c9c8c4" transform="rotate(35 592 539)"/>
<circle cx="679" cy="519" r="3" fill="#3a5230"/>
<circle cx="638" cy="525" r="2" fill="#4f6a3a"/>
<circle cx="636" cy="509" r="3" fill="#4f6a3a"/>
<circle cx="640" cy="568" r="4" fill="#4f6a3a"/>
<circle cx="682" cy="588" r="2" fill="#3a5230"/>
<circle cx="606" cy="553" r="3" fill="#5a7445"/>
<circle cx="582" cy="540" r="2" fill="#3a5230"/>
<circle cx="580" cy="527" r="4" fill="#5a7445"/>
<circle cx="611" cy="534" r="3" fill="#5a7445"/>
<circle cx="637" cy="579" r="4" fill="#3a5230"/>
<circle cx="687" cy="596" r="2" fill="#3a5230"/>
<circle cx="622" cy="547" r="3" fill="#3a5230"/>
<circle cx="628" cy="555" r="4" fill="#5a7445"/>
<circle cx="667" cy="545" r="3" fill="#5a7445"/>
<circle cx="616" cy="531" r="4" fill="#5a7445"/>
<circle cx="649" cy="539" r="4" fill="#2f4428"/>
<circle cx="643" cy="538" r="3" fill="#5a7445"/>
<circle cx="602" cy="547" r="3" fill="#3a5230"/>
<circle cx="650" cy="548" r="3" fill="#5a7445"/>
<circle cx="579" cy="534" r="4" fill="#3a5230"/>
<circle cx="633" cy="563" r="2" fill="#4f6a3a"/>
<circle cx="665" cy="507" r="3" fill="#5a7445"/>
<circle cx="679" cy="507" r="2" fill="#3a5230"/>
<circle cx="652" cy="513" r="2" fill="#5a7445"/>
<circle cx="659" cy="580" r="4" fill="#3a5230"/>
<circle cx="688" cy="558" r="4" fill="#3a5230"/>
<circle cx="653" cy="498" r="2" fill="#2f4428"/>
<circle cx="610" cy="534" r="4" fill="#4f6a3a"/>
<circle cx="616" cy="520" r="2" fill="#4f6a3a"/>
<circle cx="655" cy="562" r="4" fill="#4f6a3a"/>
<circle cx="618" cy="503" r="2" fill="#3a5230"/>
<circle cx="603" cy="522" r="2" fill="#3a5230"/>
<circle cx="566" cy="530" r="2" fill="#2f4428"/>
<circle cx="570" cy="515" r="4" fill="#5a7445"/>
<circle cx="663" cy="519" r="2" fill="#4f6a3a"/>
<circle cx="623" cy="531" r="2" fill="#4f6a3a"/>
<circle cx="670" cy="543" r="4" fill="#2f4428"/>
<circle cx="647" cy="497" r="2" fill="#3a5230"/>
<circle cx="685" cy="521" r="2" fill="#3a5230"/>
<circle cx="580" cy="538" r="2" fill="#4f6a3a"/>
<circle cx="636" cy="558" r="3" fill="#5a7445"/>
<circle cx="679" cy="507" r="2" fill="#3a5230"/>
<circle cx="628" cy="576" r="4" fill="#2f4428"/>
<circle cx="690" cy="535" r="4" fill="#2f4428"/>
<circle cx="682" cy="572" r="4" fill="#5a7445"/>
<circle cx="689" cy="569" r="3" fill="#4f6a3a"/>
<rect x="661" y="535" width="7" height="7" fill="#9c9a96" transform="rotate(35 661 535)"/>
<circle cx="598" cy="548" r="3" fill="#4f6a3a"/>
<circle cx="595" cy="561" r="3" fill="#2f4428"/>
<circle cx="615" cy="521" r="4" fill="#2f4428"/>
<circle cx="664" cy="577" r="2" fill="#3a5230"/>
<circle cx="587" cy="522" r="3" fill="#4f6a3a"/>
<circle cx="672" cy="508" r="3" fill="#3a5230"/>
<circle cx="621" cy="552" r="2" fill="#5a7445"/>
<circle cx="642" cy="512" r="3" fill="#5a7445"/>
<circle cx="678" cy="549" r="2" fill="#5a7445"/>
<circle cx="655" cy="511" r="2" fill="#3a5230"/>
<circle cx="679" cy="588" r="2" fill="#4f6a3a"/>
<circle cx="650" cy="520" r="4" fill="#2f4428"/>
<circle cx="676" cy="530" r="4" fill="#4f6a3a"/>
<circle cx="587" cy="547" r="4" fill="#5a7445"/>
<circle cx="669" cy="567" r="3" fill="#2f4428"/>
<circle cx="683" cy="572" r="3" fill="#4f6a3a"/>
<circle cx="600" cy="535" r="3" fill="#4f6a3a"/>
<circle cx="686" cy="533" r="4" fill="#3a5230"/>
<circle cx="619" cy="553" r="3" fill="#5a7445"/>
<rect x="613" y="557" width="4" height="5" fill="#c9c8c4" transform="rotate(35 613 557)"/>
<circle cx="659" cy="573" r="2" fill="#5a7445"/>
<circle cx="660" cy="506" r="2" fill="#5a7445"/>
<circle cx="685" cy="589" r="3" fill="#5a7445"/>
<circle cx="602" cy="535" r="3" fill="#3a5230"/>
<circle cx="586" cy="525" r="4" fill="#4f6a3a"/>
<circle cx="664" cy="549" r="2" fill="#4f6a3a"/>
<circle cx="659" cy="507" r="2" fill="#3a5230"/>
<circle cx="619" cy="527" r="2" fill="#2f4428"/>
<circle cx="685" cy="528" r="3" fill="#5a7445"/>
<circle cx="688" cy="603" r="2" fill="#4f6a3a"/>
<circle cx="672" cy="558" r="4" fill="#5a7445"/>
<circle cx="658" cy="524" r="3" fill="#4f6a3a"/>
<circle cx="611" cy="513" r="4" fill="#3a5230"/>
<circle cx="674" cy="569" r="4" fill="#5a7445"/>
<circle cx="677" cy="564" r="2" fill="#2f4428"/>
<circle cx="625" cy="509" r="3" fill="#5a7445"/>
<circle cx="677" cy="599" r="3" fill="#5a7445"/>
<circle cx="668" cy="529" r="2" fill="#3a5230"/>
<circle cx="616" cy="527" r="4" fill="#4f6a3a"/>
<rect x="694" y="575" width="8" height="6" fill="#7a7772" transform="rotate(35 694 575)"/>
<circle cx="639" cy="584" r="4" fill="#3a5230"/>
<circle cx="660" cy="586" r="4" fill="#2f4428"/>
<circle cx="680" cy="540" r="3" fill="#2f4428"/>
<circle cx="664" cy="516" r="3" fill="#3a5230"/>
<circle cx="631" cy="562" r="4" fill="#3a5230"/>
<rect x="651" y="497" width="5" height="4" fill="#9c9a96" transform="rotate(35 651 497)"/>
<circle cx="574" cy="517" r="4" fill="#5a7445"/>
<circle cx="564" cy="529" r="2" fill="#2f4428"/>
<circle cx="676" cy="559" r="4" fill="#3a5230"/>
<rect x="672" y="570" width="6" height="4" fill="#9c9a96" transform="rotate(35 672 570)"/>
<rect x="634" y="571" width="4" height="5" fill="#c9c8c4" transform="rotate(35 634 571)"/>
<circle cx="648" cy="589" r="4" fill="#3a5230"/>
<circle cx="657" cy="594" r="4" fill="#2f4428"/>
<circle cx="652" cy="591" r="4" fill="#2f4428"/>
<circle cx="679" cy="538" r="2" fill="#3a5230"/>
<circle cx="657" cy="556" r="2" fill="#2f4428"/>
<circle cx="688" cy="597" r="4" fill="#2f4428"/>
<circle cx="670" cy="598" r="3" fill="#5a7445"/>
<circle cx="582" cy="546" r="2" fill="#3a5230"/>
<circle cx="688" cy="520" r="4" fill="#5a7445"/>
<circle cx="667" cy="598" r="2" fill="#3a5230"/>
<circle cx="659" cy="537" r="3" fill="#5a7445"/>
<circle cx="658" cy="581" r="4" fill="#4f6a3a"/>
<circle cx="583" cy="516" r="2" fill="#4f6a3a"/>
<circle cx="667" cy="578" r="4" fill="#3a5230"/>
<rect x="675" y="550" width="4" height="5" fill="#9c9a96" transform="rotate(35 675 550)"/>
<rect x="590" y="521" width="5" height="5" fill="#9c9a96" transform="rotate(35 590 521)"/>
<circle cx="636" cy="558" r="3" fill="#4f6a3a"/>
<circle cx="673" cy="524" r="4" fill="#2f4428"/>
<circle cx="689" cy="524" r="3" fill="#2f4428"/>
<circle cx="639" cy="532" r="2" fill="#4f6a3a"/>
<circle cx="649" cy="529" r="4" fill="#5a7445"/>
<circle cx="673" cy="522" r="2" fill="#2f4428"/>
<circle cx="610" cy="550" r="3" fill="#5a7445"/>
<circle cx="636" cy="532" r="4" fill="#3a5230"/>
<circle cx="664" cy="558" r="3" fill="#4f6a3a"/>
<circle cx="672" cy="591" r="4" fill="#4f6a3a"/>
<circle cx="683" cy="594" r="2" fill="#3a5230"/>
<circle cx="672" cy="596" r="2" fill="#2f4428"/>
<circle cx="563" cy="524" r="4" fill="#3a5230"/>
<circle cx="661" cy="563" r="4" fill="#2f4428"/>
<circle cx="636" cy="512" r="2" fill="#2f4428"/>
<circle cx="588" cy="526" r="3" fill="#2f4428"/>
<rect x="662" y="531" width="5" height="7" fill="#c9c8c4" transform="rotate(35 662 531)"/>
<rect x="591" y="528" width="4" height="4" fill="#c9c8c4" transform="rotate(35 591 528)"/>
<circle cx="634" cy="574" r="4" fill="#2f4428"/>
<circle cx="619" cy="548" r="4" fill="#2f4428"/>
<circle cx="611" cy="508" r="3" fill="#3a5230"/>
<circle cx="624" cy="536" r="2" fill="#2f4428"/>
<circle cx="579" cy="517" r="3" fill="#2f4428"/>
<circle cx="589" cy="529" r="2" fill="#5a7445"/>
<circle cx="597" cy="512" r="3" fill="#4f6a3a"/>
<circle cx="634" cy="583" r="4" fill="#2f4428"/>
<circle cx="682" cy="510" r="2" fill="#2f4428"/>
<circle cx="632" cy="578" r="2" fill="#5a7445"/>
<circle cx="658" cy="581" r="4" fill="#4f6a3a"/>
<rect x="648" y="520" width="9" height="44" fill="#8d8c89" transform="rotate(-33 648 520)"/>
<rect x="650.5" y="521" width="1.4" height="42" fill="#dedede" transform="rotate(-33 648 520)"/>
<rect x="671" y="527" width="16" height="19" fill="#b9b4a8" transform="rotate(-30 671 527)"/>
<rect x="660" y="512" width="18" height="10" fill="#b4bac0" transform="rotate(-28 660 512)"/>
<rect x="592" y="478" width="14" height="10" fill="#b9bcc0" transform="rotate(30 592 478)"/>
<rect x="596" y="500" width="14" height="10" fill="#c4c6c8" transform="rotate(30 596 500)"/>
<polyline points="560,535 620,505 662,480" fill="none" stroke="#6a6762" stroke-width="4"/>
<polygon points="444,316 490,303 512,316 530,350 531,372 515,391 485,396 462,372 449,338" fill="#3d5530"/>
<circle cx="488" cy="371" r="2" fill="#4f6e3a"/>
<circle cx="503" cy="379" r="3" fill="#33502a"/>
<circle cx="458" cy="335" r="4" fill="#4f6e3a"/>
<circle cx="448" cy="325" r="2" fill="#2e4425"/>
<circle cx="464" cy="372" r="2" fill="#2e4425"/>
<circle cx="510" cy="370" r="2" fill="#4f6e3a"/>
<circle cx="503" cy="369" r="3" fill="#4f6e3a"/>
<circle cx="479" cy="384" r="5" fill="#6a7a55"/>
<circle cx="470" cy="360" r="4" fill="#4f6e3a"/>
<circle cx="490" cy="309" r="5" fill="#4f6e3a"/>
<circle cx="491" cy="346" r="2" fill="#4f6e3a"/>
<circle cx="492" cy="319" r="3" fill="#2e4425"/>
<circle cx="524" cy="359" r="3" fill="#2e4425"/>
<circle cx="497" cy="368" r="3" fill="#6a7a55"/>
<circle cx="467" cy="373" r="2" fill="#2e4425"/>
<circle cx="516" cy="368" r="4" fill="#4f6e3a"/>
<circle cx="468" cy="359" r="3" fill="#33502a"/>
<circle cx="505" cy="330" r="3" fill="#6a7a55"/>
<circle cx="488" cy="355" r="4" fill="#46603a"/>
<circle cx="456" cy="314" r="5" fill="#33502a"/>
<circle cx="493" cy="344" r="2" fill="#4f6e3a"/>
<circle cx="473" cy="368" r="2" fill="#46603a"/>
<circle cx="500" cy="360" r="3" fill="#6a7a55"/>
<circle cx="487" cy="332" r="4" fill="#2e4425"/>
<circle cx="463" cy="328" r="2" fill="#46603a"/>
<circle cx="498" cy="365" r="2" fill="#4f6e3a"/>
<circle cx="502" cy="329" r="4" fill="#2e4425"/>
<circle cx="516" cy="378" r="3" fill="#2e4425"/>
<circle cx="488" cy="392" r="5" fill="#46603a"/>
<circle cx="487" cy="350" r="3" fill="#2e4425"/>
<circle cx="474" cy="362" r="5" fill="#46603a"/>
<circle cx="490" cy="351" r="4" fill="#33502a"/>
<circle cx="497" cy="350" r="4" fill="#6a7a55"/>
<circle cx="512" cy="346" r="2" fill="#2e4425"/>
<circle cx="467" cy="325" r="3" fill="#4f6e3a"/>
<circle cx="500" cy="376" r="3" fill="#33502a"/>
<circle cx="449" cy="330" r="3" fill="#4f6e3a"/>
<circle cx="466" cy="319" r="5" fill="#2e4425"/>
<circle cx="448" cy="325" r="2" fill="#46603a"/>
<circle cx="470" cy="339" r="3" fill="#46603a"/>
<circle cx="513" cy="333" r="3" fill="#4f6e3a"/>
<circle cx="514" cy="334" r="5" fill="#33502a"/>
<circle cx="490" cy="380" r="3" fill="#2e4425"/>
<circle cx="495" cy="313" r="4" fill="#33502a"/>
<circle cx="488" cy="394" r="3" fill="#6a7a55"/>
<circle cx="494" cy="324" r="3" fill="#33502a"/>
<circle cx="525" cy="370" r="5" fill="#2e4425"/>
<circle cx="473" cy="346" r="3" fill="#4f6e3a"/>
<circle cx="486" cy="363" r="2" fill="#33502a"/>
<circle cx="447" cy="326" r="3" fill="#46603a"/>
<circle cx="520" cy="343" r="5" fill="#33502a"/>
<circle cx="474" cy="384" r="3" fill="#6a7a55"/>
<circle cx="528" cy="352" r="3" fill="#2e4425"/>
<circle cx="486" cy="347" r="5" fill="#46603a"/>
<circle cx="482" cy="346" r="2" fill="#46603a"/>
<circle cx="493" cy="325" r="2" fill="#2e4425"/>
<circle cx="500" cy="333" r="3" fill="#2e4425"/>
<circle cx="476" cy="307" r="5" fill="#33502a"/>
<circle cx="499" cy="359" r="5" fill="#33502a"/>
<circle cx="494" cy="366" r="4" fill="#4f6e3a"/>
<circle cx="505" cy="318" r="5" fill="#6a7a55"/>
<circle cx="515" cy="347" r="3" fill="#33502a"/>
<circle cx="470" cy="369" r="4" fill="#6a7a55"/>
<circle cx="517" cy="361" r="2" fill="#33502a"/>
<circle cx="489" cy="357" r="2" fill="#33502a"/>
<circle cx="493" cy="377" r="4" fill="#46603a"/>
<circle cx="525" cy="367" r="2" fill="#46603a"/>
<circle cx="469" cy="352" r="5" fill="#6a7a55"/>
<circle cx="489" cy="345" r="3" fill="#33502a"/>
<circle cx="473" cy="377" r="3" fill="#6a7a55"/>
<circle cx="453" cy="347" r="3" fill="#46603a"/>
<circle cx="504" cy="374" r="3" fill="#6a7a55"/>
<circle cx="515" cy="374" r="5" fill="#33502a"/>
<circle cx="468" cy="328" r="4" fill="#4f6e3a"/>
<circle cx="516" cy="325" r="4" fill="#6a7a55"/>
<circle cx="508" cy="369" r="4" fill="#4f6e3a"/>
<circle cx="474" cy="358" r="4" fill="#33502a"/>
<circle cx="480" cy="326" r="4" fill="#33502a"/>
<circle cx="503" cy="324" r="5" fill="#6a7a55"/>
<circle cx="455" cy="332" r="4" fill="#46603a"/>
<circle cx="518" cy="356" r="5" fill="#46603a"/>
<circle cx="516" cy="351" r="4" fill="#33502a"/>
<circle cx="453" cy="333" r="3" fill="#4f6e3a"/>
<circle cx="483" cy="371" r="3" fill="#46603a"/>
<circle cx="513" cy="358" r="4" fill="#33502a"/>
<circle cx="488" cy="330" r="4" fill="#4f6e3a"/>
<circle cx="490" cy="350" r="2" fill="#6a7a55"/>
<circle cx="506" cy="390" r="5" fill="#4f6e3a"/>
<circle cx="465" cy="319" r="3" fill="#46603a"/>
<circle cx="505" cy="317" r="3" fill="#6a7a55"/>
<circle cx="505" cy="333" r="3" fill="#46603a"/>
<circle cx="510" cy="345" r="5" fill="#6a7a55"/>
<circle cx="464" cy="337" r="4" fill="#4f6e3a"/>
<circle cx="477" cy="331" r="5" fill="#33502a"/>
<circle cx="463" cy="314" r="3" fill="#2e4425"/>
<circle cx="465" cy="374" r="2" fill="#46603a"/>
<circle cx="487" cy="381" r="4" fill="#33502a"/>
<circle cx="485" cy="377" r="5" fill="#33502a"/>
<circle cx="486" cy="390" r="3" fill="#4f6e3a"/>
<circle cx="493" cy="379" r="4" fill="#6a7a55"/>
<circle cx="471" cy="367" r="4" fill="#46603a"/>
<circle cx="478" cy="322" r="4" fill="#2e4425"/>
<circle cx="499" cy="378" r="5" fill="#46603a"/>
<circle cx="517" cy="327" r="5" fill="#4f6e3a"/>
<circle cx="461" cy="318" r="3" fill="#2e4425"/>
<circle cx="519" cy="351" r="4" fill="#33502a"/>
<circle cx="465" cy="358" r="5" fill="#33502a"/>
<circle cx="490" cy="314" r="2" fill="#46603a"/>
<circle cx="510" cy="387" r="4" fill="#33502a"/>
<circle cx="452" cy="345" r="5" fill="#33502a"/>
<circle cx="496" cy="365" r="3" fill="#33502a"/>
<circle cx="484" cy="366" r="3" fill="#4f6e3a"/>
<circle cx="449" cy="333" r="2" fill="#6a7a55"/>
<circle cx="464" cy="367" r="5" fill="#33502a"/>
<circle cx="515" cy="377" r="5" fill="#2e4425"/>
<circle cx="474" cy="376" r="4" fill="#2e4425"/>
<circle cx="474" cy="315" r="3" fill="#2e4425"/>
<circle cx="472" cy="339" r="2" fill="#33502a"/>
<circle cx="472" cy="359" r="4" fill="#6a7a55"/>
<circle cx="466" cy="343" r="3" fill="#4f6e3a"/>
<circle cx="502" cy="386" r="5" fill="#46603a"/>
<circle cx="484" cy="389" r="3" fill="#4f6e3a"/>
<circle cx="505" cy="314" r="3" fill="#6a7a55"/>
<circle cx="521" cy="370" r="3" fill="#4f6e3a"/>
<circle cx="470" cy="320" r="4" fill="#33502a"/>
<circle cx="508" cy="336" r="2" fill="#33502a"/>
<circle cx="483" cy="370" r="5" fill="#46603a"/>
<circle cx="501" cy="324" r="5" fill="#46603a"/>
<circle cx="454" cy="326" r="5" fill="#2e4425"/>
<circle cx="522" cy="355" r="3" fill="#6a7a55"/>
<circle cx="493" cy="368" r="5" fill="#2e4425"/>
<circle cx="485" cy="359" r="4" fill="#6a7a55"/>
<circle cx="516" cy="369" r="2" fill="#4f6e3a"/>
<circle cx="451" cy="315" r="2" fill="#33502a"/>
<circle cx="490" cy="322" r="4" fill="#33502a"/>
<circle cx="488" cy="356" r="2" fill="#46603a"/>
<circle cx="509" cy="365" r="4" fill="#33502a"/>
<circle cx="489" cy="368" r="5" fill="#4f6e3a"/>
<circle cx="477" cy="333" r="4" fill="#4f6e3a"/>
<circle cx="478" cy="370" r="5" fill="#2e4425"/>
<circle cx="514" cy="364" r="3" fill="#46603a"/>
<circle cx="508" cy="331" r="3" fill="#46603a"/>
<circle cx="504" cy="381" r="3" fill="#2e4425"/>
<circle cx="492" cy="369" r="4" fill="#33502a"/>
<circle cx="496" cy="325" r="4" fill="#33502a"/>
<circle cx="493" cy="379" r="3" fill="#6a7a55"/>
<circle cx="467" cy="362" r="3" fill="#2e4425"/>
<circle cx="497" cy="356" r="2" fill="#2e4425"/>
<circle cx="478" cy="331" r="5" fill="#4f6e3a"/>
<circle cx="477" cy="378" r="2" fill="#33502a"/>
<circle cx="484" cy="310" r="3" fill="#2e4425"/>
<circle cx="498" cy="369" r="2" fill="#6a7a55"/>
<circle cx="515" cy="387" r="2" fill="#2e4425"/>
<circle cx="477" cy="345" r="5" fill="#4f6e3a"/>
<circle cx="452" cy="339" r="5" fill="#6a7a55"/>
<circle cx="494" cy="306" r="4" fill="#4f6e3a"/>
<circle cx="504" cy="391" r="3" fill="#2e4425"/>
<circle cx="497" cy="339" r="3" fill="#4f6e3a"/>
<circle cx="487" cy="353" r="4" fill="#6a7a55"/>
<circle cx="482" cy="323" r="4" fill="#2e4425"/>
<circle cx="483" cy="309" r="2" fill="#4f6e3a"/>
<circle cx="511" cy="376" r="3" fill="#2e4425"/>
<circle cx="457" cy="340" r="4" fill="#4f6e3a"/>
<circle cx="525" cy="353" r="3" fill="#33502a"/>
<circle cx="506" cy="335" r="3" fill="#4f6e3a"/>
<circle cx="461" cy="326" r="5" fill="#6a7a55"/>
<circle cx="466" cy="374" r="2" fill="#46603a"/>
<circle cx="517" cy="376" r="2" fill="#2e4425"/>
<circle cx="497" cy="393" r="3" fill="#2e4425"/>
<circle cx="460" cy="366" r="3" fill="#2e4425"/>
<circle cx="516" cy="327" r="3" fill="#2e4425"/>
<circle cx="484" cy="374" r="3" fill="#33502a"/>
<circle cx="519" cy="334" r="3" fill="#46603a"/>
<circle cx="505" cy="387" r="2" fill="#33502a"/>
<circle cx="457" cy="359" r="5" fill="#33502a"/>
<circle cx="507" cy="316" r="4" fill="#46603a"/>
<circle cx="512" cy="354" r="4" fill="#33502a"/>
<circle cx="477" cy="367" r="5" fill="#6a7a55"/>
<circle cx="460" cy="335" r="4" fill="#4f6e3a"/>
<circle cx="475" cy="321" r="4" fill="#6a7a55"/>
<circle cx="461" cy="312" r="2" fill="#33502a"/>
<circle cx="462" cy="342" r="3" fill="#46603a"/>
<circle cx="508" cy="345" r="5" fill="#33502a"/>
<circle cx="515" cy="383" r="3" fill="#33502a"/>
<circle cx="449" cy="322" r="5" fill="#6a7a55"/>
<circle cx="519" cy="383" r="3" fill="#46603a"/>
<circle cx="487" cy="307" r="4" fill="#46603a"/>
<circle cx="503" cy="354" r="3" fill="#2e4425"/>
<circle cx="461" cy="347" r="4" fill="#2e4425"/>
<circle cx="464" cy="326" r="5" fill="#6a7a55"/>
<circle cx="528" cy="371" r="2" fill="#4f6e3a"/>
<circle cx="498" cy="389" r="2" fill="#46603a"/>
<circle cx="490" cy="369" r="5" fill="#4f6e3a"/>
<circle cx="469" cy="333" r="4" fill="#33502a"/>
<circle cx="500" cy="337" r="3" fill="#46603a"/>
<circle cx="473" cy="378" r="3" fill="#4f6e3a"/>
<circle cx="490" cy="330" r="2" fill="#2e4425"/>
<circle cx="481" cy="335" r="5" fill="#4f6e3a"/>
<circle cx="479" cy="382" r="2" fill="#33502a"/>
<circle cx="453" cy="317" r="4" fill="#33502a"/>
<circle cx="455" cy="351" r="5" fill="#4f6e3a"/>
<circle cx="477" cy="347" r="3" fill="#46603a"/>
<circle cx="485" cy="311" r="5" fill="#4f6e3a"/>
<circle cx="513" cy="319" r="2" fill="#33502a"/>
<circle cx="452" cy="329" r="5" fill="#6a7a55"/>
<circle cx="505" cy="318" r="2" fill="#2e4425"/>
<circle cx="477" cy="369" r="3" fill="#46603a"/>
<circle cx="521" cy="348" r="2" fill="#6a7a55"/>
<circle cx="493" cy="371" r="5" fill="#4f6e3a"/>
<circle cx="465" cy="329" r="3" fill="#33502a"/>
<circle cx="486" cy="346" r="2" fill="#33502a"/>
<circle cx="525" cy="369" r="4" fill="#46603a"/>
<circle cx="491" cy="306" r="2" fill="#6a7a55"/>
<circle cx="520" cy="355" r="3" fill="#33502a"/>
<circle cx="494" cy="323" r="3" fill="#4f6e3a"/>
<circle cx="473" cy="362" r="3" fill="#46603a"/>
<circle cx="499" cy="379" r="2" fill="#6a7a55"/>
<circle cx="514" cy="341" r="3" fill="#4f6e3a"/>
<circle cx="478" cy="374" r="2" fill="#2e4425"/>
<circle cx="521" cy="342" r="2" fill="#2e4425"/>
<circle cx="491" cy="356" r="2" fill="#33502a"/>
<circle cx="491" cy="366" r="2" fill="#33502a"/>
<circle cx="477" cy="363" r="4" fill="#6a7a55"/>
<circle cx="454" cy="319" r="2" fill="#4f6e3a"/>
<circle cx="506" cy="341" r="2" fill="#33502a"/>
<circle cx="467" cy="362" r="3" fill="#2e4425"/>
<circle cx="492" cy="306" r="4" fill="#2e4425"/>
<circle cx="465" cy="339" r="4" fill="#46603a"/>
<circle cx="523" cy="364" r="2" fill="#33502a"/>
<circle cx="503" cy="320" r="3" fill="#4f6e3a"/>
<polygon points="597,261 733,208 742,214 754,265 644,340" fill="#62803d"/>
<polygon points="647,347 759,271 769,291 757,331 737,356 720,382 708,405 690,408 676,402 658,378" fill="#5f7f39"/>
<polygon points="558,428 601,407 632,444 589,474" fill="#6c8a45"/>
<polygon points="783,315 820,364 824,370 717,455 718,411 727,387 746,361 770,331" fill="#8c6b56"/>
<polygon points="592,474 632,447 653,471 629,508 613,502" fill="#8b6650"/>
<polygon points="644,434 662,422 680,437 680,453 662,456" fill="#8a6a55"/>
<polygon points="677,395 703,388 706,420 690,428 680,420" fill="#8a6a55"/>
<polygon points="684,471 705,465 711,483 693,492" fill="#8a6a55"/>
<polygon points="540,440 572,424 596,466 566,482" fill="#9a958b"/>
<clipPath id="f0"><polygon points="597,261 733,208 742,214 754,265 644,340"/></clipPath><g clip-path="url(#f0)">
<circle cx="701" cy="284" r="3" fill="#76905a" opacity=".6"/>
<circle cx="638" cy="319" r="3" fill="#52703a" opacity=".6"/>
<circle cx="721" cy="221" r="2" fill="#8a8a62" opacity=".6"/>
<circle cx="648" cy="331" r="4" fill="#52703a" opacity=".6"/>
<circle cx="716" cy="266" r="5" fill="#52703a" opacity=".6"/>
<circle cx="693" cy="278" r="5" fill="#8a8a62" opacity=".6"/>
<circle cx="655" cy="315" r="2" fill="#52703a" opacity=".6"/>
<circle cx="687" cy="294" r="2" fill="#8a8a62" opacity=".6"/>
<circle cx="668" cy="319" r="4" fill="#52703a" opacity=".6"/>
<circle cx="655" cy="324" r="4" fill="#8a8a62" opacity=".6"/>
<circle cx="703" cy="293" r="4" fill="#76905a" opacity=".6"/>
<circle cx="710" cy="244" r="2" fill="#76905a" opacity=".6"/>
<circle cx="648" cy="291" r="5" fill="#8a8a62" opacity=".6"/>
<circle cx="684" cy="256" r="5" fill="#76905a" opacity=".6"/>
<circle cx="728" cy="220" r="2" fill="#76905a" opacity=".6"/>
<circle cx="731" cy="241" r="4" fill="#8a8a62" opacity=".6"/>
<circle cx="696" cy="259" r="5" fill="#76905a" opacity=".6"/>
<circle cx="640" cy="245" r="3" fill="#52703a" opacity=".6"/>
<circle cx="616" cy="262" r="3" fill="#52703a" opacity=".6"/>
<circle cx="649" cy="281" r="2" fill="#76905a" opacity=".6"/>
<circle cx="653" cy="332" r="2" fill="#52703a" opacity=".6"/>
<circle cx="616" cy="255" r="4" fill="#76905a" opacity=".6"/>
<circle cx="641" cy="286" r="3" fill="#8a8a62" opacity=".6"/>
<circle cx="668" cy="255" r="3" fill="#52703a" opacity=".6"/>
<circle cx="697" cy="277" r="2" fill="#8a8a62" opacity=".6"/>
<circle cx="705" cy="261" r="4" fill="#76905a" opacity=".6"/>
<circle cx="699" cy="252" r="2" fill="#76905a" opacity=".6"/>
<circle cx="745" cy="251" r="5" fill="#8a8a62" opacity=".6"/>
<circle cx="711" cy="284" r="5" fill="#8a8a62" opacity=".6"/>
<circle cx="718" cy="225" r="5" fill="#76905a" opacity=".6"/>
<circle cx="655" cy="267" r="4" fill="#52703a" opacity=".6"/>
<circle cx="675" cy="299" r="2" fill="#8a8a62" opacity=".6"/>
<circle cx="644" cy="283" r="5" fill="#52703a" opacity=".6"/>
<circle cx="718" cy="214" r="5" fill="#76905a" opacity=".6"/>
<circle cx="703" cy="260" r="3" fill="#8a8a62" opacity=".6"/>
<circle cx="741" cy="220" r="5" fill="#76905a" opacity=".6"/>
<circle cx="659" cy="267" r="4" fill="#76905a" opacity=".6"/>
<circle cx="677" cy="277" r="4" fill="#52703a" opacity=".6"/>
<circle cx="678" cy="293" r="4" fill="#8a8a62" opacity=".6"/>
<circle cx="636" cy="255" r="4" fill="#76905a" opacity=".6"/>
<circle cx="739" cy="234" r="5" fill="#76905a" opacity=".6"/>
<circle cx="729" cy="214" r="2" fill="#52703a" opacity=".6"/>
<circle cx="692" cy="242" r="3" fill="#76905a" opacity=".6"/>
<circle cx="681" cy="290" r="2" fill="#52703a" opacity=".6"/>
<circle cx="671" cy="273" r="5" fill="#8a8a62" opacity=".6"/>
<circle cx="646" cy="251" r="4" fill="#76905a" opacity=".6"/>
<circle cx="685" cy="245" r="2" fill="#76905a" opacity=".6"/>
<circle cx="674" cy="248" r="4" fill="#8a8a62" opacity=".6"/>
<circle cx="703" cy="239" r="5" fill="#52703a" opacity=".6"/>
<circle cx="626" cy="289" r="4" fill="#52703a" opacity=".6"/>
<circle cx="744" cy="263" r="4" fill="#52703a" opacity=".6"/>
<circle cx="690" cy="249" r="4" fill="#8a8a62" opacity=".6"/>
<circle cx="681" cy="311" r="4" fill="#76905a" opacity=".6"/>
<circle cx="646" cy="300" r="4" fill="#76905a" opacity=".6"/>
<circle cx="705" cy="221" r="5" fill="#8a8a62" opacity=".6"/>
<circle cx="712" cy="283" r="5" fill="#76905a" opacity=".6"/>
<circle cx="644" cy="246" r="2" fill="#8a8a62" opacity=".6"/>
<circle cx="677" cy="255" r="3" fill="#52703a" opacity=".6"/>
<circle cx="727" cy="211" r="5" fill="#76905a" opacity=".6"/>
<circle cx="676" cy="247" r="2" fill="#52703a" opacity=".6"/>
<circle cx="625" cy="276" r="3" fill="#76905a" opacity=".6"/>
<circle cx="643" cy="269" r="3" fill="#76905a" opacity=".6"/>
<circle cx="693" cy="262" r="4" fill="#52703a" opacity=".6"/>
<circle cx="744" cy="245" r="4" fill="#76905a" opacity=".6"/>
<circle cx="654" cy="327" r="2" fill="#76905a" opacity=".6"/>
<circle cx="644" cy="253" r="4" fill="#76905a" opacity=".6"/>
<circle cx="646" cy="247" r="2" fill="#52703a" opacity=".6"/>
<circle cx="643" cy="305" r="3" fill="#76905a" opacity=".6"/>
<circle cx="649" cy="298" r="2" fill="#8a8a62" opacity=".6"/>
<circle cx="655" cy="249" r="5" fill="#8a8a62" opacity=".6"/>
<circle cx="619" cy="256" r="2" fill="#52703a" opacity=".6"/>
<circle cx="663" cy="277" r="2" fill="#76905a" opacity=".6"/>
<circle cx="703" cy="284" r="3" fill="#8a8a62" opacity=".6"/>
<circle cx="659" cy="264" r="3" fill="#8a8a62" opacity=".6"/>
<circle cx="651" cy="280" r="2" fill="#8a8a62" opacity=".6"/>
<circle cx="616" cy="256" r="5" fill="#8a8a62" opacity=".6"/>
<circle cx="652" cy="291" r="3" fill="#52703a" opacity=".6"/>
<circle cx="656" cy="284" r="4" fill="#52703a" opacity=".6"/>
<circle cx="672" cy="261" r="4" fill="#52703a" opacity=".6"/>
<circle cx="738" cy="229" r="5" fill="#8a8a62" opacity=".6"/>
<circle cx="741" cy="234" r="3" fill="#76905a" opacity=".6"/>
<circle cx="671" cy="263" r="2" fill="#76905a" opacity=".6"/>
<circle cx="687" cy="274" r="3" fill="#76905a" opacity=".6"/>
<circle cx="727" cy="278" r="3" fill="#8a8a62" opacity=".6"/>
<circle cx="723" cy="239" r="5" fill="#76905a" opacity=".6"/>
<circle cx="680" cy="302" r="2" fill="#52703a" opacity=".6"/>
<circle cx="716" cy="288" r="5" fill="#76905a" opacity=".6"/>
<circle cx="724" cy="249" r="5" fill="#52703a" opacity=".6"/>
<circle cx="669" cy="276" r="5" fill="#52703a" opacity=".6"/>
<circle cx="641" cy="254" r="2" fill="#52703a" opacity=".6"/>
<circle cx="703" cy="254" r="5" fill="#52703a" opacity=".6"/>
<circle cx="703" cy="267" r="3" fill="#76905a" opacity=".6"/>
<circle cx="652" cy="244" r="2" fill="#8a8a62" opacity=".6"/>
<circle cx="620" cy="259" r="2" fill="#76905a" opacity=".6"/>
<circle cx="660" cy="318" r="4" fill="#8a8a62" opacity=".6"/>
<circle cx="651" cy="251" r="4" fill="#76905a" opacity=".6"/>
<circle cx="615" cy="281" r="5" fill="#8a8a62" opacity=".6"/>
<circle cx="748" cy="262" r="2" fill="#52703a" opacity=".6"/>
<circle cx="676" cy="311" r="4" fill="#76905a" opacity=".6"/>
<circle cx="712" cy="274" r="3" fill="#8a8a62" opacity=".6"/>
<circle cx="729" cy="211" r="2" fill="#76905a" opacity=".6"/>
<circle cx="649" cy="262" r="5" fill="#52703a" opacity=".6"/>
<circle cx="637" cy="273" r="2" fill="#76905a" opacity=".6"/>
<circle cx="681" cy="233" r="5" fill="#52703a" opacity=".6"/>
<circle cx="654" cy="294" r="3" fill="#76905a" opacity=".6"/>
<circle cx="675" cy="235" r="4" fill="#76905a" opacity=".6"/>
<circle cx="643" cy="278" r="2" fill="#52703a" opacity=".6"/>
<circle cx="689" cy="233" r="4" fill="#8a8a62" opacity=".6"/>
<circle cx="736" cy="239" r="5" fill="#8a8a62" opacity=".6"/>
<circle cx="683" cy="306" r="3" fill="#52703a" opacity=".6"/>
<circle cx="622" cy="257" r="4" fill="#76905a" opacity=".6"/>
<circle cx="669" cy="281" r="5" fill="#8a8a62" opacity=".6"/>
<circle cx="662" cy="266" r="2" fill="#8a8a62" opacity=".6"/>
<circle cx="657" cy="323" r="4" fill="#52703a" opacity=".6"/>
<circle cx="735" cy="251" r="5" fill="#8a8a62" opacity=".6"/>
<circle cx="670" cy="238" r="3" fill="#76905a" opacity=".6"/>
<circle cx="734" cy="258" r="4" fill="#8a8a62" opacity=".6"/>
<circle cx="726" cy="257" r="3" fill="#76905a" opacity=".6"/>
<circle cx="670" cy="233" r="2" fill="#76905a" opacity=".6"/>
<circle cx="742" cy="224" r="4" fill="#8a8a62" opacity=".6"/>
<circle cx="672" cy="254" r="2" fill="#8a8a62" opacity=".6"/>
<circle cx="742" cy="259" r="4" fill="#8a8a62" opacity=".6"/>
<circle cx="623" cy="257" r="4" fill="#76905a" opacity=".6"/>
<circle cx="653" cy="251" r="5" fill="#52703a" opacity=".6"/>
<circle cx="607" cy="266" r="5" fill="#52703a" opacity=".6"/>
<circle cx="666" cy="323" r="3" fill="#52703a" opacity=".6"/>
<circle cx="687" cy="236" r="3" fill="#52703a" opacity=".6"/>
<circle cx="682" cy="236" r="5" fill="#8a8a62" opacity=".6"/>
<circle cx="668" cy="322" r="5" fill="#8a8a62" opacity=".6"/>
<circle cx="705" cy="288" r="2" fill="#8a8a62" opacity=".6"/>
<circle cx="724" cy="245" r="5" fill="#8a8a62" opacity=".6"/>
<circle cx="677" cy="280" r="2" fill="#76905a" opacity=".6"/>
<circle cx="688" cy="304" r="3" fill="#8a8a62" opacity=".6"/>
<circle cx="682" cy="294" r="3" fill="#76905a" opacity=".6"/>
<circle cx="707" cy="219" r="3" fill="#8a8a62" opacity=".6"/>
<circle cx="680" cy="247" r="3" fill="#76905a" opacity=".6"/>
<circle cx="729" cy="212" r="4" fill="#52703a" opacity=".6"/>
<circle cx="697" cy="249" r="4" fill="#52703a" opacity=".6"/>
<circle cx="612" cy="262" r="2" fill="#52703a" opacity=".6"/>
<circle cx="645" cy="284" r="3" fill="#8a8a62" opacity=".6"/>
<circle cx="664" cy="249" r="3" fill="#76905a" opacity=".6"/>
<circle cx="725" cy="272" r="5" fill="#8a8a62" opacity=".6"/>
<circle cx="705" cy="253" r="5" fill="#52703a" opacity=".6"/>
<circle cx="702" cy="298" r="5" fill="#76905a" opacity=".6"/>
<circle cx="644" cy="262" r="2" fill="#76905a" opacity=".6"/>
<circle cx="724" cy="216" r="3" fill="#8a8a62" opacity=".6"/>
<circle cx="712" cy="229" r="2" fill="#52703a" opacity=".6"/>
<circle cx="611" cy="280" r="4" fill="#8a8a62" opacity=".6"/>
<circle cx="731" cy="231" r="5" fill="#76905a" opacity=".6"/>
<circle cx="716" cy="238" r="5" fill="#52703a" opacity=".6"/>
<circle cx="707" cy="231" r="3" fill="#76905a" opacity=".6"/>
<circle cx="696" cy="274" r="2" fill="#8a8a62" opacity=".6"/>
<circle cx="682" cy="289" r="2" fill="#52703a" opacity=".6"/>
<circle cx="739" cy="216" r="5" fill="#8a8a62" opacity=".6"/>
<circle cx="746" cy="249" r="2" fill="#52703a" opacity=".6"/>
<circle cx="705" cy="263" r="3" fill="#8a8a62" opacity=".6"/>
<circle cx="640" cy="253" r="2" fill="#76905a" opacity=".6"/>
<circle cx="662" cy="326" r="2" fill="#8a8a62" opacity=".6"/>
<circle cx="745" cy="243" r="4" fill="#8a8a62" opacity=".6"/>
<circle cx="699" cy="233" r="2" fill="#52703a" opacity=".6"/>
<circle cx="640" cy="248" r="5" fill="#8a8a62" opacity=".6"/>
<circle cx="667" cy="298" r="5" fill="#52703a" opacity=".6"/>
<circle cx="727" cy="228" r="3" fill="#8a8a62" opacity=".6"/>
<circle cx="686" cy="235" r="2" fill="#76905a" opacity=".6"/>
<circle cx="657" cy="254" r="2" fill="#52703a" opacity=".6"/>
<circle cx="725" cy="260" r="3" fill="#52703a" opacity=".6"/>
<circle cx="631" cy="309" r="4" fill="#76905a" opacity=".6"/>
<circle cx="743" cy="236" r="2" fill="#76905a" opacity=".6"/>
<circle cx="661" cy="288" r="3" fill="#76905a" opacity=".6"/>
<circle cx="644" cy="302" r="4" fill="#76905a" opacity=".6"/>
<circle cx="660" cy="252" r="3" fill="#8a8a62" opacity=".6"/>
<circle cx="716" cy="247" r="5" fill="#8a8a62" opacity=".6"/>
<circle cx="683" cy="260" r="5" fill="#76905a" opacity=".6"/>
<circle cx="675" cy="239" r="3" fill="#52703a" opacity=".6"/>
<circle cx="694" cy="278" r="4" fill="#8a8a62" opacity=".6"/>
<circle cx="739" cy="213" r="3" fill="#52703a" opacity=".6"/>
<circle cx="712" cy="291" r="5" fill="#8a8a62" opacity=".6"/>
<circle cx="685" cy="280" r="4" fill="#8a8a62" opacity=".6"/>
<circle cx="627" cy="311" r="2" fill="#76905a" opacity=".6"/>
<circle cx="665" cy="268" r="5" fill="#76905a" opacity=".6"/>
<circle cx="648" cy="311" r="3" fill="#52703a" opacity=".6"/>
<circle cx="605" cy="272" r="3" fill="#8a8a62" opacity=".6"/>
<circle cx="686" cy="294" r="4" fill="#76905a" opacity=".6"/>
<circle cx="703" cy="259" r="2" fill="#76905a" opacity=".6"/>
<circle cx="740" cy="230" r="5" fill="#52703a" opacity=".6"/>
<circle cx="674" cy="259" r="4" fill="#8a8a62" opacity=".6"/>
<circle cx="655" cy="314" r="5" fill="#8a8a62" opacity=".6"/>
<circle cx="741" cy="254" r="2" fill="#8a8a62" opacity=".6"/>
<circle cx="752" cy="262" r="4" fill="#76905a" opacity=".6"/>
<circle cx="646" cy="289" r="3" fill="#52703a" opacity=".6"/>
<circle cx="679" cy="293" r="5" fill="#52703a" opacity=".6"/>
<circle cx="728" cy="263" r="4" fill="#76905a" opacity=".6"/>
<circle cx="678" cy="267" r="5" fill="#52703a" opacity=".6"/>
<circle cx="728" cy="218" r="2" fill="#76905a" opacity=".6"/>
<circle cx="699" cy="296" r="3" fill="#52703a" opacity=".6"/>
<circle cx="683" cy="288" r="3" fill="#52703a" opacity=".6"/>
<circle cx="664" cy="270" r="2" fill="#76905a" opacity=".6"/>
<circle cx="683" cy="254" r="2" fill="#8a8a62" opacity=".6"/>
<circle cx="692" cy="239" r="2" fill="#8a8a62" opacity=".6"/>
<circle cx="644" cy="301" r="2" fill="#8a8a62" opacity=".6"/>
<circle cx="705" cy="239" r="3" fill="#76905a" opacity=".6"/>
<circle cx="677" cy="287" r="4" fill="#52703a" opacity=".6"/>
<circle cx="683" cy="300" r="3" fill="#8a8a62" opacity=".6"/>
<circle cx="651" cy="311" r="3" fill="#52703a" opacity=".6"/>
<circle cx="724" cy="269" r="3" fill="#76905a" opacity=".6"/>
<circle cx="652" cy="267" r="4" fill="#8a8a62" opacity=".6"/>
<circle cx="733" cy="231" r="5" fill="#76905a" opacity=".6"/>
<circle cx="681" cy="290" r="5" fill="#76905a" opacity=".6"/>
<circle cx="718" cy="270" r="2" fill="#52703a" opacity=".6"/>
<circle cx="701" cy="254" r="2" fill="#52703a" opacity=".6"/>
<circle cx="641" cy="263" r="3" fill="#52703a" opacity=".6"/>
<circle cx="670" cy="255" r="5" fill="#52703a" opacity=".6"/>
<circle cx="706" cy="222" r="4" fill="#8a8a62" opacity=".6"/>
<circle cx="726" cy="240" r="4" fill="#52703a" opacity=".6"/>
<circle cx="662" cy="325" r="5" fill="#52703a" opacity=".6"/>
<circle cx="639" cy="286" r="3" fill="#8a8a62" opacity=".6"/>
<circle cx="707" cy="293" r="3" fill="#8a8a62" opacity=".6"/>
<circle cx="651" cy="328" r="2" fill="#52703a" opacity=".6"/>
<circle cx="673" cy="299" r="5" fill="#8a8a62" opacity=".6"/>
<circle cx="711" cy="260" r="4" fill="#52703a" opacity=".6"/>
<circle cx="691" cy="227" r="5" fill="#8a8a62" opacity=".6"/>
<circle cx="671" cy="302" r="2" fill="#76905a" opacity=".6"/>
<circle cx="694" cy="228" r="4" fill="#8a8a62" opacity=".6"/>
<circle cx="731" cy="279" r="4" fill="#76905a" opacity=".6"/>
<circle cx="709" cy="255" r="3" fill="#8a8a62" opacity=".6"/>
<circle cx="640" cy="278" r="5" fill="#8a8a62" opacity=".6"/>
<circle cx="640" cy="269" r="2" fill="#8a8a62" opacity=".6"/>
<circle cx="725" cy="273" r="3" fill="#76905a" opacity=".6"/>
<circle cx="646" cy="243" r="3" fill="#8a8a62" opacity=".6"/>
<circle cx="644" cy="321" r="3" fill="#8a8a62" opacity=".6"/>
<circle cx="735" cy="247" r="5" fill="#8a8a62" opacity=".6"/>
<circle cx="649" cy="308" r="2" fill="#76905a" opacity=".6"/>
<circle cx="610" cy="263" r="3" fill="#8a8a62" opacity=".6"/>
<circle cx="680" cy="312" r="4" fill="#76905a" opacity=".6"/>
<circle cx="737" cy="230" r="4" fill="#52703a" opacity=".6"/>
<circle cx="727" cy="248" r="2" fill="#76905a" opacity=".6"/>
<circle cx="700" cy="294" r="5" fill="#52703a" opacity=".6"/>
<circle cx="726" cy="227" r="4" fill="#52703a" opacity=".6"/>
<circle cx="656" cy="278" r="2" fill="#76905a" opacity=".6"/>
<circle cx="650" cy="288" r="5" fill="#76905a" opacity=".6"/>
<circle cx="650" cy="264" r="5" fill="#52703a" opacity=".6"/>
<circle cx="690" cy="260" r="4" fill="#8a8a62" opacity=".6"/>
<circle cx="668" cy="303" r="2" fill="#76905a" opacity=".6"/>
<circle cx="640" cy="330" r="3" fill="#52703a" opacity=".6"/>
<circle cx="716" cy="256" r="4" fill="#52703a" opacity=".6"/>
<circle cx="681" cy="271" r="4" fill="#8a8a62" opacity=".6"/>
<circle cx="643" cy="310" r="5" fill="#76905a" opacity=".6"/>
<circle cx="715" cy="259" r="4" fill="#52703a" opacity=".6"/>
<circle cx="628" cy="255" r="3" fill="#52703a" opacity=".6"/>
<circle cx="677" cy="302" r="3" fill="#8a8a62" opacity=".6"/>
<circle cx="659" cy="253" r="5" fill="#8a8a62" opacity=".6"/>
<circle cx="735" cy="264" r="3" fill="#52703a" opacity=".6"/>
<circle cx="621" cy="289" r="2" fill="#52703a" opacity=".6"/>
<circle cx="672" cy="246" r="5" fill="#8a8a62" opacity=".6"/>
<circle cx="670" cy="253" r="5" fill="#8a8a62" opacity=".6"/>
<circle cx="664" cy="306" r="5" fill="#52703a" opacity=".6"/>
<circle cx="663" cy="241" r="4" fill="#76905a" opacity=".6"/>
<circle cx="651" cy="301" r="3" fill="#8a8a62" opacity=".6"/>
<circle cx="617" cy="270" r="2" fill="#8a8a62" opacity=".6"/>
<circle cx="699" cy="290" r="5" fill="#52703a" opacity=".6"/>
<circle cx="643" cy="280" r="3" fill="#8a8a62" opacity=".6"/>
<circle cx="624" cy="301" r="2" fill="#8a8a62" opacity=".6"/>
</g>
<clipPath id="f1"><polygon points="647,347 759,271 769,291 757,331 737,356 720,382 708,405 690,408 676,402 658,378"/></clipPath><g clip-path="url(#f1)">
<circle cx="730" cy="300" r="4" fill="#688a3f" opacity=".6"/>
<circle cx="726" cy="343" r="2" fill="#688a3f" opacity=".6"/>
<circle cx="726" cy="295" r="2" fill="#72904c" opacity=".6"/>
<circle cx="681" cy="395" r="5" fill="#688a3f" opacity=".6"/>
<circle cx="719" cy="369" r="3" fill="#50703a" opacity=".6"/>
<circle cx="742" cy="303" r="3" fill="#72904c" opacity=".6"/>
<circle cx="669" cy="372" r="2" fill="#50703a" opacity=".6"/>
<circle cx="651" cy="352" r="2" fill="#50703a" opacity=".6"/>
<circle cx="664" cy="337" r="4" fill="#72904c" opacity=".6"/>
<circle cx="754" cy="303" r="5" fill="#72904c" opacity=".6"/>
<circle cx="691" cy="378" r="3" fill="#688a3f" opacity=".6"/>
<circle cx="710" cy="376" r="3" fill="#72904c" opacity=".6"/>
<circle cx="703" cy="398" r="4" fill="#50703a" opacity=".6"/>
<circle cx="681" cy="347" r="5" fill="#50703a" opacity=".6"/>
<circle cx="687" cy="337" r="5" fill="#50703a" opacity=".6"/>
<circle cx="762" cy="301" r="2" fill="#72904c" opacity=".6"/>
<circle cx="725" cy="364" r="3" fill="#688a3f" opacity=".6"/>
<circle cx="675" cy="361" r="2" fill="#688a3f" opacity=".6"/>
<circle cx="691" cy="333" r="5" fill="#50703a" opacity=".6"/>
<circle cx="712" cy="309" r="2" fill="#50703a" opacity=".6"/>
<circle cx="677" cy="371" r="3" fill="#688a3f" opacity=".6"/>
<circle cx="762" cy="314" r="5" fill="#50703a" opacity=".6"/>
<circle cx="756" cy="322" r="4" fill="#688a3f" opacity=".6"/>
<circle cx="755" cy="319" r="4" fill="#50703a" opacity=".6"/>
<circle cx="717" cy="312" r="5" fill="#688a3f" opacity=".6"/>
<circle cx="699" cy="332" r="2" fill="#50703a" opacity=".6"/>
<circle cx="759" cy="314" r="2" fill="#50703a" opacity=".6"/>
<circle cx="738" cy="286" r="3" fill="#72904c" opacity=".6"/>
<circle cx="655" cy="367" r="4" fill="#688a3f" opacity=".6"/>
<circle cx="689" cy="399" r="3" fill="#50703a" opacity=".6"/>
<circle cx="701" cy="399" r="5" fill="#72904c" opacity=".6"/>
<circle cx="745" cy="291" r="3" fill="#688a3f" opacity=".6"/>
<circle cx="676" cy="399" r="3" fill="#50703a" opacity=".6"/>
<circle cx="679" cy="387" r="5" fill="#50703a" opacity=".6"/>
<circle cx="740" cy="290" r="2" fill="#50703a" opacity=".6"/>
<circle cx="696" cy="384" r="2" fill="#50703a" opacity=".6"/>
<circle cx="659" cy="363" r="3" fill="#688a3f" opacity=".6"/>
<circle cx="717" cy="340" r="3" fill="#688a3f" opacity=".6"/>
<circle cx="690" cy="360" r="4" fill="#50703a" opacity=".6"/>
<circle cx="680" cy="325" r="2" fill="#50703a" opacity=".6"/>
<circle cx="752" cy="309" r="5" fill="#50703a" opacity=".6"/>
<circle cx="699" cy="373" r="5" fill="#50703a" opacity=".6"/>
<circle cx="705" cy="397" r="5" fill="#72904c" opacity=".6"/>
<circle cx="717" cy="330" r="5" fill="#50703a" opacity=".6"/>
<circle cx="750" cy="316" r="5" fill="#72904c" opacity=".6"/>
<circle cx="751" cy="301" r="5" fill="#688a3f" opacity=".6"/>
<circle cx="697" cy="336" r="3" fill="#50703a" opacity=".6"/>
<circle cx="710" cy="380" r="2" fill="#688a3f" opacity=".6"/>
<circle cx="756" cy="299" r="2" fill="#72904c" opacity=".6"/>
<circle cx="682" cy="377" r="5" fill="#50703a" opacity=".6"/>
<circle cx="688" cy="367" r="4" fill="#688a3f" opacity=".6"/>
<circle cx="753" cy="280" r="5" fill="#688a3f" opacity=".6"/>
<circle cx="661" cy="377" r="3" fill="#72904c" opacity=".6"/>
<circle cx="732" cy="321" r="3" fill="#72904c" opacity=".6"/>
<circle cx="735" cy="296" r="2" fill="#688a3f" opacity=".6"/>
<circle cx="664" cy="341" r="2" fill="#72904c" opacity=".6"/>
<circle cx="715" cy="306" r="5" fill="#50703a" opacity=".6"/>
<circle cx="710" cy="346" r="5" fill="#688a3f" opacity=".6"/>
<circle cx="694" cy="344" r="5" fill="#50703a" opacity=".6"/>
<circle cx="717" cy="301" r="4" fill="#72904c" opacity=".6"/>
<circle cx="748" cy="288" r="4" fill="#688a3f" opacity=".6"/>
<circle cx="658" cy="361" r="3" fill="#688a3f" opacity=".6"/>
<circle cx="723" cy="352" r="5" fill="#688a3f" opacity=".6"/>
<circle cx="714" cy="355" r="2" fill="#72904c" opacity=".6"/>
<circle cx="706" cy="328" r="2" fill="#50703a" opacity=".6"/>
<circle cx="727" cy="345" r="2" fill="#688a3f" opacity=".6"/>
<circle cx="659" cy="355" r="4" fill="#50703a" opacity=".6"/>
<circle cx="715" cy="348" r="3" fill="#688a3f" opacity=".6"/>
<circle cx="741" cy="335" r="2" fill="#72904c" opacity=".6"/>
<circle cx="751" cy="311" r="2" fill="#50703a" opacity=".6"/>
<circle cx="738" cy="340" r="3" fill="#50703a" opacity=".6"/>
<circle cx="674" cy="346" r="4" fill="#72904c" opacity=".6"/>
<circle cx="657" cy="367" r="2" fill="#688a3f" opacity=".6"/>
<circle cx="747" cy="343" r="3" fill="#688a3f" opacity=".6"/>
<circle cx="698" cy="322" r="5" fill="#50703a" opacity=".6"/>
<circle cx="668" cy="384" r="3" fill="#72904c" opacity=".6"/>
<circle cx="729" cy="346" r="4" fill="#72904c" opacity=".6"/>
<circle cx="729" cy="307" r="2" fill="#72904c" opacity=".6"/>
<circle cx="745" cy="328" r="4" fill="#50703a" opacity=".6"/>
<circle cx="669" cy="333" r="5" fill="#72904c" opacity=".6"/>
<circle cx="736" cy="346" r="5" fill="#50703a" opacity=".6"/>
<circle cx="748" cy="286" r="5" fill="#688a3f" opacity=".6"/>
<circle cx="655" cy="354" r="4" fill="#72904c" opacity=".6"/>
<circle cx="662" cy="368" r="2" fill="#72904c" opacity=".6"/>
<circle cx="734" cy="293" r="4" fill="#50703a" opacity=".6"/>
<circle cx="693" cy="333" r="3" fill="#688a3f" opacity=".6"/>
<circle cx="754" cy="319" r="2" fill="#72904c" opacity=".6"/>
<circle cx="684" cy="340" r="5" fill="#72904c" opacity=".6"/>
<circle cx="724" cy="312" r="2" fill="#50703a" opacity=".6"/>
<circle cx="665" cy="342" r="4" fill="#688a3f" opacity=".6"/>
<circle cx="754" cy="288" r="5" fill="#72904c" opacity=".6"/>
<circle cx="761" cy="311" r="2" fill="#72904c" opacity=".6"/>
<circle cx="689" cy="323" r="5" fill="#72904c" opacity=".6"/>
<circle cx="727" cy="299" r="3" fill="#72904c" opacity=".6"/>
<circle cx="707" cy="345" r="4" fill="#688a3f" opacity=".6"/>
<circle cx="738" cy="287" r="4" fill="#688a3f" opacity=".6"/>
<circle cx="755" cy="298" r="2" fill="#50703a" opacity=".6"/>
<circle cx="742" cy="320" r="3" fill="#688a3f" opacity=".6"/>
<circle cx="705" cy="370" r="2" fill="#688a3f" opacity=".6"/>
<circle cx="729" cy="340" r="3" fill="#50703a" opacity=".6"/>
<circle cx="732" cy="297" r="5" fill="#50703a" opacity=".6"/>
<circle cx="680" cy="346" r="4" fill="#72904c" opacity=".6"/>
<circle cx="732" cy="294" r="4" fill="#72904c" opacity=".6"/>
<circle cx="702" cy="316" r="2" fill="#50703a" opacity=".6"/>
<circle cx="724" cy="319" r="3" fill="#50703a" opacity=".6"/>
<circle cx="733" cy="314" r="2" fill="#688a3f" opacity=".6"/>
<circle cx="709" cy="368" r="2" fill="#72904c" opacity=".6"/>
<circle cx="731" cy="317" r="4" fill="#50703a" opacity=".6"/>
<circle cx="693" cy="378" r="4" fill="#72904c" opacity=".6"/>
<circle cx="673" cy="338" r="4" fill="#72904c" opacity=".6"/>
<circle cx="755" cy="325" r="5" fill="#50703a" opacity=".6"/>
<circle cx="748" cy="316" r="5" fill="#688a3f" opacity=".6"/>
<circle cx="669" cy="340" r="4" fill="#72904c" opacity=".6"/>
<circle cx="681" cy="363" r="5" fill="#50703a" opacity=".6"/>
<circle cx="719" cy="313" r="3" fill="#72904c" opacity=".6"/>
<circle cx="690" cy="354" r="4" fill="#72904c" opacity=".6"/>
<circle cx="705" cy="387" r="4" fill="#72904c" opacity=".6"/>
<circle cx="676" cy="329" r="3" fill="#72904c" opacity=".6"/>
<circle cx="687" cy="374" r="5" fill="#72904c" opacity=".6"/>
<circle cx="659" cy="340" r="3" fill="#688a3f" opacity=".6"/>
<circle cx="679" cy="380" r="5" fill="#688a3f" opacity=".6"/>
<circle cx="737" cy="304" r="5" fill="#50703a" opacity=".6"/>
<circle cx="762" cy="291" r="5" fill="#50703a" opacity=".6"/>
<circle cx="735" cy="351" r="3" fill="#72904c" opacity=".6"/>
<circle cx="753" cy="323" r="2" fill="#72904c" opacity=".6"/>
<circle cx="672" cy="338" r="4" fill="#72904c" opacity=".6"/>
<circle cx="701" cy="312" r="3" fill="#72904c" opacity=".6"/>
<circle cx="678" cy="346" r="4" fill="#72904c" opacity=".6"/>
<circle cx="733" cy="331" r="2" fill="#688a3f" opacity=".6"/>
<circle cx="711" cy="330" r="5" fill="#688a3f" opacity=".6"/>
<circle cx="728" cy="333" r="4" fill="#72904c" opacity=".6"/>
<circle cx="664" cy="374" r="4" fill="#50703a" opacity=".6"/>
<circle cx="709" cy="330" r="5" fill="#50703a" opacity=".6"/>
<circle cx="679" cy="334" r="5" fill="#50703a" opacity=".6"/>
<circle cx="739" cy="313" r="2" fill="#688a3f" opacity=".6"/>
<circle cx="658" cy="370" r="3" fill="#72904c" opacity=".6"/>
<circle cx="665" cy="340" r="3" fill="#688a3f" opacity=".6"/>
<circle cx="698" cy="319" r="2" fill="#688a3f" opacity=".6"/>
<circle cx="740" cy="309" r="3" fill="#50703a" opacity=".6"/>
<circle cx="735" cy="349" r="2" fill="#50703a" opacity=".6"/>
<circle cx="722" cy="303" r="3" fill="#50703a" opacity=".6"/>
<circle cx="719" cy="372" r="5" fill="#72904c" opacity=".6"/>
<circle cx="730" cy="318" r="2" fill="#688a3f" opacity=".6"/>
<circle cx="740" cy="293" r="4" fill="#688a3f" opacity=".6"/>
<circle cx="717" cy="309" r="3" fill="#72904c" opacity=".6"/>
<circle cx="746" cy="305" r="4" fill="#72904c" opacity=".6"/>
<circle cx="690" cy="343" r="3" fill="#688a3f" opacity=".6"/>
<circle cx="710" cy="381" r="4" fill="#50703a" opacity=".6"/>
<circle cx="762" cy="281" r="3" fill="#688a3f" opacity=".6"/>
<circle cx="675" cy="354" r="4" fill="#688a3f" opacity=".6"/>
<circle cx="694" cy="328" r="4" fill="#688a3f" opacity=".6"/>
<circle cx="699" cy="384" r="5" fill="#50703a" opacity=".6"/>
<circle cx="655" cy="359" r="5" fill="#688a3f" opacity=".6"/>
<circle cx="657" cy="356" r="2" fill="#72904c" opacity=".6"/>
<circle cx="714" cy="393" r="5" fill="#72904c" opacity=".6"/>
<circle cx="760" cy="288" r="2" fill="#50703a" opacity=".6"/>
<circle cx="713" cy="302" r="4" fill="#72904c" opacity=".6"/>
<circle cx="761" cy="298" r="2" fill="#72904c" opacity=".6"/>
<circle cx="711" cy="391" r="4" fill="#50703a" opacity=".6"/>
<circle cx="687" cy="384" r="5" fill="#72904c" opacity=".6"/>
<circle cx="693" cy="390" r="4" fill="#50703a" opacity=".6"/>
<circle cx="726" cy="318" r="3" fill="#50703a" opacity=".6"/>
<circle cx="662" cy="352" r="4" fill="#50703a" opacity=".6"/>
<circle cx="695" cy="369" r="3" fill="#50703a" opacity=".6"/>
<circle cx="743" cy="288" r="4" fill="#50703a" opacity=".6"/>
<circle cx="686" cy="374" r="4" fill="#50703a" opacity=".6"/>
<circle cx="736" cy="310" r="4" fill="#688a3f" opacity=".6"/>
<circle cx="721" cy="303" r="2" fill="#688a3f" opacity=".6"/>
<circle cx="707" cy="339" r="4" fill="#72904c" opacity=".6"/>
<circle cx="730" cy="348" r="4" fill="#72904c" opacity=".6"/>
<circle cx="734" cy="345" r="2" fill="#72904c" opacity=".6"/>
<circle cx="664" cy="359" r="3" fill="#688a3f" opacity=".6"/>
<circle cx="669" cy="361" r="5" fill="#72904c" opacity=".6"/>
<circle cx="708" cy="387" r="3" fill="#50703a" opacity=".6"/>
<circle cx="737" cy="345" r="5" fill="#688a3f" opacity=".6"/>
<circle cx="684" cy="324" r="3" fill="#50703a" opacity=".6"/>
<circle cx="766" cy="294" r="2" fill="#50703a" opacity=".6"/>
<circle cx="678" cy="373" r="4" fill="#72904c" opacity=".6"/>
<circle cx="684" cy="332" r="4" fill="#50703a" opacity=".6"/>
<circle cx="736" cy="346" r="3" fill="#688a3f" opacity=".6"/>
<circle cx="672" cy="373" r="4" fill="#688a3f" opacity=".6"/>
<circle cx="713" cy="354" r="5" fill="#688a3f" opacity=".6"/>
<circle cx="709" cy="402" r="4" fill="#50703a" opacity=".6"/>
<circle cx="702" cy="349" r="3" fill="#50703a" opacity=".6"/>
<circle cx="744" cy="322" r="2" fill="#688a3f" opacity=".6"/>
<circle cx="693" cy="366" r="3" fill="#72904c" opacity=".6"/>
<circle cx="690" cy="381" r="4" fill="#72904c" opacity=".6"/>
<circle cx="727" cy="349" r="4" fill="#50703a" opacity=".6"/>
<circle cx="717" cy="323" r="5" fill="#50703a" opacity=".6"/>
<circle cx="725" cy="352" r="5" fill="#688a3f" opacity=".6"/>
<circle cx="705" cy="371" r="5" fill="#72904c" opacity=".6"/>
<circle cx="682" cy="358" r="5" fill="#688a3f" opacity=".6"/>
<circle cx="749" cy="314" r="3" fill="#72904c" opacity=".6"/>
</g>
<clipPath id="f2"><polygon points="783,315 820,364 824,370 717,455 718,411 727,387 746,361 770,331"/></clipPath><g clip-path="url(#f2)">
<circle cx="720" cy="418" r="3" fill="#9a7660" opacity=".6"/>
<circle cx="755" cy="367" r="5" fill="#a3806a" opacity=".6"/>
<circle cx="723" cy="426" r="4" fill="#a3806a" opacity=".6"/>
<circle cx="800" cy="369" r="3" fill="#a3806a" opacity=".6"/>
<circle cx="730" cy="406" r="5" fill="#9a7660" opacity=".6"/>
<circle cx="800" cy="378" r="5" fill="#a3806a" opacity=".6"/>
<circle cx="786" cy="325" r="3" fill="#9a7660" opacity=".6"/>
<circle cx="765" cy="369" r="3" fill="#a3806a" opacity=".6"/>
<circle cx="795" cy="346" r="2" fill="#9a7660" opacity=".6"/>
<circle cx="798" cy="347" r="5" fill="#7e604e" opacity=".6"/>
<circle cx="727" cy="445" r="4" fill="#7e604e" opacity=".6"/>
<circle cx="739" cy="437" r="3" fill="#9a7660" opacity=".6"/>
<circle cx="793" cy="346" r="2" fill="#a3806a" opacity=".6"/>
<circle cx="725" cy="419" r="5" fill="#7e604e" opacity=".6"/>
<circle cx="765" cy="364" r="5" fill="#7e604e" opacity=".6"/>
<circle cx="761" cy="355" r="3" fill="#a3806a" opacity=".6"/>
<circle cx="751" cy="389" r="3" fill="#a3806a" opacity=".6"/>
<circle cx="724" cy="445" r="3" fill="#9a7660" opacity=".6"/>
<circle cx="766" cy="341" r="4" fill="#a3806a" opacity=".6"/>
<circle cx="787" cy="361" r="3" fill="#7e604e" opacity=".6"/>
<circle cx="752" cy="373" r="3" fill="#a3806a" opacity=".6"/>
<circle cx="775" cy="339" r="4" fill="#9a7660" opacity=".6"/>
<circle cx="750" cy="399" r="2" fill="#7e604e" opacity=".6"/>
<circle cx="758" cy="416" r="3" fill="#a3806a" opacity=".6"/>
<circle cx="736" cy="416" r="4" fill="#7e604e" opacity=".6"/>
<circle cx="735" cy="417" r="4" fill="#9a7660" opacity=".6"/>
<circle cx="738" cy="404" r="3" fill="#a3806a" opacity=".6"/>
<circle cx="734" cy="434" r="5" fill="#a3806a" opacity=".6"/>
<circle cx="724" cy="445" r="2" fill="#a3806a" opacity=".6"/>
<circle cx="815" cy="364" r="3" fill="#7e604e" opacity=".6"/>
<circle cx="760" cy="353" r="5" fill="#9a7660" opacity=".6"/>
<circle cx="760" cy="370" r="3" fill="#9a7660" opacity=".6"/>
<circle cx="792" cy="330" r="2" fill="#9a7660" opacity=".6"/>
<circle cx="774" cy="384" r="5" fill="#9a7660" opacity=".6"/>
<circle cx="755" cy="356" r="3" fill="#9a7660" opacity=".6"/>
<circle cx="753" cy="406" r="2" fill="#7e604e" opacity=".6"/>
<circle cx="771" cy="354" r="4" fill="#7e604e" opacity=".6"/>
<circle cx="761" cy="394" r="4" fill="#a3806a" opacity=".6"/>
<circle cx="792" cy="351" r="2" fill="#9a7660" opacity=".6"/>
<circle cx="789" cy="363" r="4" fill="#9a7660" opacity=".6"/>
<circle cx="725" cy="441" r="2" fill="#a3806a" opacity=".6"/>
<circle cx="762" cy="348" r="5" fill="#a3806a" opacity=".6"/>
<circle cx="809" cy="381" r="3" fill="#a3806a" opacity=".6"/>
<circle cx="757" cy="403" r="4" fill="#a3806a" opacity=".6"/>
<circle cx="794" cy="363" r="2" fill="#9a7660" opacity=".6"/>
<circle cx="786" cy="392" r="4" fill="#a3806a" opacity=".6"/>
<circle cx="777" cy="399" r="2" fill="#a3806a" opacity=".6"/>
<circle cx="760" cy="395" r="4" fill="#a3806a" opacity=".6"/>
<circle cx="760" cy="419" r="2" fill="#9a7660" opacity=".6"/>
<circle cx="721" cy="416" r="4" fill="#7e604e" opacity=".6"/>
<circle cx="791" cy="387" r="3" fill="#9a7660" opacity=".6"/>
<circle cx="786" cy="341" r="4" fill="#a3806a" opacity=".6"/>
<circle cx="738" cy="406" r="4" fill="#9a7660" opacity=".6"/>
<circle cx="789" cy="327" r="4" fill="#a3806a" opacity=".6"/>
<circle cx="743" cy="391" r="3" fill="#9a7660" opacity=".6"/>
<circle cx="781" cy="375" r="3" fill="#9a7660" opacity=".6"/>
<circle cx="786" cy="334" r="4" fill="#9a7660" opacity=".6"/>
<circle cx="790" cy="362" r="5" fill="#9a7660" opacity=".6"/>
<circle cx="787" cy="390" r="4" fill="#9a7660" opacity=".6"/>
<circle cx="796" cy="384" r="3" fill="#7e604e" opacity=".6"/>
<circle cx="813" cy="371" r="3" fill="#a3806a" opacity=".6"/>
<circle cx="748" cy="429" r="3" fill="#a3806a" opacity=".6"/>
<circle cx="779" cy="343" r="2" fill="#7e604e" opacity=".6"/>
<circle cx="778" cy="334" r="3" fill="#7e604e" opacity=".6"/>
<circle cx="725" cy="403" r="2" fill="#a3806a" opacity=".6"/>
<circle cx="762" cy="357" r="3" fill="#9a7660" opacity=".6"/>
<circle cx="779" cy="331" r="3" fill="#9a7660" opacity=".6"/>
<circle cx="745" cy="387" r="4" fill="#a3806a" opacity=".6"/>
<circle cx="747" cy="385" r="3" fill="#a3806a" opacity=".6"/>
<circle cx="803" cy="374" r="2" fill="#a3806a" opacity=".6"/>
<circle cx="812" cy="369" r="3" fill="#a3806a" opacity=".6"/>
<circle cx="731" cy="425" r="5" fill="#9a7660" opacity=".6"/>
<circle cx="772" cy="384" r="4" fill="#a3806a" opacity=".6"/>
<circle cx="731" cy="397" r="2" fill="#9a7660" opacity=".6"/>
<circle cx="792" cy="346" r="5" fill="#7e604e" opacity=".6"/>
<circle cx="763" cy="350" r="5" fill="#7e604e" opacity=".6"/>
<circle cx="771" cy="396" r="5" fill="#7e604e" opacity=".6"/>
<circle cx="737" cy="405" r="3" fill="#a3806a" opacity=".6"/>
<circle cx="725" cy="425" r="3" fill="#9a7660" opacity=".6"/>
<circle cx="742" cy="414" r="3" fill="#9a7660" opacity=".6"/>
<circle cx="778" cy="339" r="2" fill="#a3806a" opacity=".6"/>
<circle cx="797" cy="368" r="5" fill="#9a7660" opacity=".6"/>
<circle cx="735" cy="439" r="3" fill="#a3806a" opacity=".6"/>
<circle cx="773" cy="382" r="2" fill="#9a7660" opacity=".6"/>
<circle cx="767" cy="361" r="2" fill="#9a7660" opacity=".6"/>
<circle cx="724" cy="428" r="4" fill="#a3806a" opacity=".6"/>
<circle cx="727" cy="407" r="5" fill="#9a7660" opacity=".6"/>
<circle cx="764" cy="364" r="3" fill="#9a7660" opacity=".6"/>
<circle cx="771" cy="338" r="2" fill="#7e604e" opacity=".6"/>
<circle cx="780" cy="383" r="3" fill="#a3806a" opacity=".6"/>
<circle cx="728" cy="386" r="3" fill="#a3806a" opacity=".6"/>
<circle cx="751" cy="427" r="4" fill="#a3806a" opacity=".6"/>
<circle cx="739" cy="414" r="5" fill="#9a7660" opacity=".6"/>
<circle cx="742" cy="367" r="4" fill="#9a7660" opacity=".6"/>
<circle cx="764" cy="406" r="5" fill="#7e604e" opacity=".6"/>
<circle cx="782" cy="329" r="5" fill="#9a7660" opacity=".6"/>
<circle cx="787" cy="329" r="2" fill="#a3806a" opacity=".6"/>
<circle cx="778" cy="344" r="2" fill="#7e604e" opacity=".6"/>
<circle cx="753" cy="403" r="2" fill="#a3806a" opacity=".6"/>
<circle cx="800" cy="365" r="2" fill="#9a7660" opacity=".6"/>
<circle cx="770" cy="336" r="2" fill="#9a7660" opacity=".6"/>
<circle cx="783" cy="379" r="4" fill="#7e604e" opacity=".6"/>
<circle cx="798" cy="360" r="5" fill="#7e604e" opacity=".6"/>
<circle cx="733" cy="382" r="5" fill="#a3806a" opacity=".6"/>
<circle cx="771" cy="366" r="4" fill="#a3806a" opacity=".6"/>
<circle cx="783" cy="347" r="2" fill="#7e604e" opacity=".6"/>
<circle cx="765" cy="372" r="4" fill="#7e604e" opacity=".6"/>
<circle cx="787" cy="390" r="5" fill="#a3806a" opacity=".6"/>
<circle cx="785" cy="394" r="5" fill="#7e604e" opacity=".6"/>
<circle cx="753" cy="399" r="4" fill="#7e604e" opacity=".6"/>
<circle cx="773" cy="386" r="2" fill="#9a7660" opacity=".6"/>
<circle cx="820" cy="366" r="4" fill="#7e604e" opacity=".6"/>
<circle cx="733" cy="424" r="4" fill="#9a7660" opacity=".6"/>
<circle cx="752" cy="395" r="5" fill="#a3806a" opacity=".6"/>
<circle cx="768" cy="360" r="2" fill="#a3806a" opacity=".6"/>
<circle cx="790" cy="392" r="5" fill="#a3806a" opacity=".6"/>
<circle cx="735" cy="407" r="2" fill="#a3806a" opacity=".6"/>
<circle cx="755" cy="396" r="3" fill="#7e604e" opacity=".6"/>
<circle cx="796" cy="387" r="4" fill="#9a7660" opacity=".6"/>
<circle cx="811" cy="372" r="2" fill="#9a7660" opacity=".6"/>
<circle cx="798" cy="358" r="5" fill="#a3806a" opacity=".6"/>
<circle cx="788" cy="375" r="5" fill="#9a7660" opacity=".6"/>
<circle cx="758" cy="381" r="3" fill="#9a7660" opacity=".6"/>
<circle cx="724" cy="441" r="3" fill="#7e604e" opacity=".6"/>
<circle cx="762" cy="360" r="4" fill="#a3806a" opacity=".6"/>
<circle cx="819" cy="364" r="4" fill="#7e604e" opacity=".6"/>
<circle cx="718" cy="425" r="2" fill="#a3806a" opacity=".6"/>
<circle cx="796" cy="373" r="4" fill="#a3806a" opacity=".6"/>
<circle cx="734" cy="416" r="5" fill="#9a7660" opacity=".6"/>
<circle cx="780" cy="388" r="4" fill="#7e604e" opacity=".6"/>
<circle cx="734" cy="395" r="2" fill="#a3806a" opacity=".6"/>
<circle cx="804" cy="366" r="4" fill="#7e604e" opacity=".6"/>
<circle cx="809" cy="355" r="2" fill="#a3806a" opacity=".6"/>
<circle cx="724" cy="442" r="2" fill="#a3806a" opacity=".6"/>
<circle cx="795" cy="345" r="4" fill="#9a7660" opacity=".6"/>
<circle cx="724" cy="420" r="3" fill="#7e604e" opacity=".6"/>
<circle cx="750" cy="386" r="5" fill="#9a7660" opacity=".6"/>
<circle cx="740" cy="380" r="4" fill="#7e604e" opacity=".6"/>
<circle cx="747" cy="399" r="3" fill="#a3806a" opacity=".6"/>
<circle cx="760" cy="409" r="3" fill="#7e604e" opacity=".6"/>
<circle cx="735" cy="393" r="2" fill="#a3806a" opacity=".6"/>
<circle cx="805" cy="378" r="5" fill="#a3806a" opacity=".6"/>
<circle cx="767" cy="337" r="3" fill="#7e604e" opacity=".6"/>
<circle cx="726" cy="403" r="4" fill="#a3806a" opacity=".6"/>
<circle cx="812" cy="357" r="4" fill="#a3806a" opacity=".6"/>
<circle cx="806" cy="377" r="3" fill="#9a7660" opacity=".6"/>
<circle cx="755" cy="387" r="3" fill="#a3806a" opacity=".6"/>
<circle cx="763" cy="346" r="3" fill="#a3806a" opacity=".6"/>
</g>
<clipPath id="f3"><polygon points="592,474 632,447 653,471 629,508 613,502"/></clipPath><g clip-path="url(#f3)">
<circle cx="639" cy="481" r="5" fill="#9a7660" opacity=".6"/>
<circle cx="622" cy="501" r="4" fill="#9a7660" opacity=".6"/>
<circle cx="615" cy="489" r="2" fill="#9a7660" opacity=".6"/>
<circle cx="616" cy="497" r="5" fill="#7e604e" opacity=".6"/>
<circle cx="617" cy="467" r="3" fill="#7e604e" opacity=".6"/>
<circle cx="628" cy="490" r="3" fill="#9a7660" opacity=".6"/>
<circle cx="633" cy="500" r="3" fill="#7e604e" opacity=".6"/>
<circle cx="598" cy="476" r="4" fill="#9a7660" opacity=".6"/>
<circle cx="636" cy="477" r="5" fill="#9a7660" opacity=".6"/>
<circle cx="613" cy="495" r="5" fill="#9a7660" opacity=".6"/>
<circle cx="608" cy="482" r="4" fill="#9a7660" opacity=".6"/>
<circle cx="633" cy="497" r="4" fill="#9a7660" opacity=".6"/>
<circle cx="617" cy="494" r="5" fill="#7e604e" opacity=".6"/>
<circle cx="642" cy="476" r="5" fill="#9a7660" opacity=".6"/>
<circle cx="624" cy="473" r="3" fill="#7e604e" opacity=".6"/>
<circle cx="621" cy="491" r="4" fill="#9a7660" opacity=".6"/>
<circle cx="623" cy="475" r="5" fill="#9a7660" opacity=".6"/>
<circle cx="640" cy="477" r="5" fill="#9a7660" opacity=".6"/>
<circle cx="626" cy="463" r="2" fill="#7e604e" opacity=".6"/>
<circle cx="611" cy="473" r="2" fill="#9a7660" opacity=".6"/>
<circle cx="620" cy="493" r="5" fill="#7e604e" opacity=".6"/>
<circle cx="626" cy="495" r="2" fill="#7e604e" opacity=".6"/>
<circle cx="626" cy="455" r="3" fill="#9a7660" opacity=".6"/>
<circle cx="638" cy="463" r="4" fill="#7e604e" opacity=".6"/>
<circle cx="619" cy="485" r="3" fill="#9a7660" opacity=".6"/>
<circle cx="633" cy="461" r="4" fill="#9a7660" opacity=".6"/>
<circle cx="619" cy="491" r="2" fill="#9a7660" opacity=".6"/>
<circle cx="603" cy="487" r="4" fill="#9a7660" opacity=".6"/>
<circle cx="635" cy="458" r="3" fill="#7e604e" opacity=".6"/>
<circle cx="627" cy="496" r="4" fill="#9a7660" opacity=".6"/>
<circle cx="647" cy="471" r="5" fill="#9a7660" opacity=".6"/>
<circle cx="629" cy="452" r="3" fill="#9a7660" opacity=".6"/>
<circle cx="618" cy="496" r="5" fill="#9a7660" opacity=".6"/>
<circle cx="627" cy="475" r="3" fill="#7e604e" opacity=".6"/>
<circle cx="638" cy="461" r="2" fill="#9a7660" opacity=".6"/>
<circle cx="604" cy="477" r="5" fill="#7e604e" opacity=".6"/>
<circle cx="608" cy="483" r="2" fill="#9a7660" opacity=".6"/>
<circle cx="615" cy="476" r="3" fill="#7e604e" opacity=".6"/>
<circle cx="606" cy="489" r="3" fill="#9a7660" opacity=".6"/>
<circle cx="609" cy="464" r="5" fill="#7e604e" opacity=".6"/>
<circle cx="624" cy="482" r="3" fill="#7e604e" opacity=".6"/>
<circle cx="615" cy="496" r="4" fill="#7e604e" opacity=".6"/>
<circle cx="625" cy="467" r="5" fill="#7e604e" opacity=".6"/>
<circle cx="614" cy="488" r="4" fill="#7e604e" opacity=".6"/>
<circle cx="648" cy="466" r="4" fill="#7e604e" opacity=".6"/>
<circle cx="611" cy="464" r="3" fill="#9a7660" opacity=".6"/>
<circle cx="598" cy="474" r="5" fill="#7e604e" opacity=".6"/>
<circle cx="595" cy="475" r="4" fill="#7e604e" opacity=".6"/>
<circle cx="626" cy="479" r="5" fill="#7e604e" opacity=".6"/>
</g>
<clipPath id="f4"><polygon points="558,428 601,407 632,444 589,474"/></clipPath><g clip-path="url(#f4)">
<circle cx="584" cy="442" r="3" fill="#5e7c3e" opacity=".6"/>
<circle cx="605" cy="458" r="4" fill="#7a9455" opacity=".6"/>
<circle cx="599" cy="426" r="2" fill="#7a9455" opacity=".6"/>
<circle cx="602" cy="442" r="3" fill="#7a9455" opacity=".6"/>
<circle cx="597" cy="446" r="4" fill="#7a9455" opacity=".6"/>
<circle cx="603" cy="448" r="3" fill="#5e7c3e" opacity=".6"/>
<circle cx="608" cy="452" r="3" fill="#7a9455" opacity=".6"/>
<circle cx="571" cy="435" r="3" fill="#5e7c3e" opacity=".6"/>
<circle cx="615" cy="427" r="5" fill="#7a9455" opacity=".6"/>
<circle cx="588" cy="443" r="4" fill="#5e7c3e" opacity=".6"/>
<circle cx="601" cy="457" r="2" fill="#5e7c3e" opacity=".6"/>
<circle cx="593" cy="441" r="2" fill="#7a9455" opacity=".6"/>
<circle cx="587" cy="424" r="5" fill="#7a9455" opacity=".6"/>
<circle cx="566" cy="431" r="4" fill="#5e7c3e" opacity=".6"/>
<circle cx="576" cy="436" r="2" fill="#7a9455" opacity=".6"/>
<circle cx="592" cy="432" r="5" fill="#7a9455" opacity=".6"/>
<circle cx="585" cy="436" r="4" fill="#5e7c3e" opacity=".6"/>
<circle cx="600" cy="430" r="2" fill="#7a9455" opacity=".6"/>
<circle cx="615" cy="454" r="2" fill="#7a9455" opacity=".6"/>
<circle cx="592" cy="414" r="2" fill="#7a9455" opacity=".6"/>
<circle cx="601" cy="422" r="3" fill="#5e7c3e" opacity=".6"/>
<circle cx="624" cy="448" r="3" fill="#5e7c3e" opacity=".6"/>
<circle cx="597" cy="456" r="2" fill="#7a9455" opacity=".6"/>
<circle cx="570" cy="423" r="5" fill="#5e7c3e" opacity=".6"/>
<circle cx="569" cy="442" r="3" fill="#5e7c3e" opacity=".6"/>
<circle cx="577" cy="420" r="4" fill="#5e7c3e" opacity=".6"/>
<circle cx="613" cy="440" r="5" fill="#5e7c3e" opacity=".6"/>
<circle cx="587" cy="426" r="3" fill="#5e7c3e" opacity=".6"/>
<circle cx="624" cy="440" r="2" fill="#7a9455" opacity=".6"/>
<circle cx="565" cy="435" r="5" fill="#5e7c3e" opacity=".6"/>
<circle cx="593" cy="469" r="2" fill="#7a9455" opacity=".6"/>
<circle cx="594" cy="462" r="3" fill="#5e7c3e" opacity=".6"/>
<circle cx="574" cy="427" r="2" fill="#5e7c3e" opacity=".6"/>
<circle cx="568" cy="435" r="2" fill="#5e7c3e" opacity=".6"/>
<circle cx="610" cy="418" r="3" fill="#7a9455" opacity=".6"/>
<circle cx="573" cy="444" r="2" fill="#7a9455" opacity=".6"/>
<circle cx="596" cy="461" r="5" fill="#5e7c3e" opacity=".6"/>
<circle cx="584" cy="458" r="5" fill="#5e7c3e" opacity=".6"/>
<circle cx="568" cy="441" r="3" fill="#7a9455" opacity=".6"/>
<circle cx="587" cy="428" r="4" fill="#7a9455" opacity=".6"/>
<circle cx="607" cy="449" r="5" fill="#5e7c3e" opacity=".6"/>
<circle cx="612" cy="458" r="4" fill="#5e7c3e" opacity=".6"/>
<circle cx="560" cy="429" r="2" fill="#7a9455" opacity=".6"/>
<circle cx="604" cy="457" r="4" fill="#7a9455" opacity=".6"/>
<circle cx="578" cy="437" r="2" fill="#7a9455" opacity=".6"/>
<circle cx="598" cy="426" r="5" fill="#7a9455" opacity=".6"/>
<circle cx="592" cy="413" r="4" fill="#5e7c3e" opacity=".6"/>
<circle cx="618" cy="441" r="5" fill="#7a9455" opacity=".6"/>
<circle cx="585" cy="446" r="5" fill="#7a9455" opacity=".6"/>
<circle cx="608" cy="423" r="2" fill="#5e7c3e" opacity=".6"/>
<circle cx="571" cy="441" r="4" fill="#7a9455" opacity=".6"/>
<circle cx="603" cy="446" r="3" fill="#7a9455" opacity=".6"/>
<circle cx="588" cy="454" r="5" fill="#5e7c3e" opacity=".6"/>
<circle cx="581" cy="456" r="2" fill="#5e7c3e" opacity=".6"/>
<circle cx="623" cy="444" r="3" fill="#5e7c3e" opacity=".6"/>
<circle cx="600" cy="446" r="3" fill="#7a9455" opacity=".6"/>
<circle cx="579" cy="437" r="3" fill="#7a9455" opacity=".6"/>
<circle cx="580" cy="451" r="3" fill="#5e7c3e" opacity=".6"/>
<circle cx="574" cy="427" r="2" fill="#7a9455" opacity=".6"/>
<circle cx="604" cy="443" r="2" fill="#7a9455" opacity=".6"/>
<circle cx="601" cy="412" r="4" fill="#5e7c3e" opacity=".6"/>
<circle cx="615" cy="428" r="4" fill="#5e7c3e" opacity=".6"/>
</g>
<polygon points="421,318 740.6,187 742,200 423,328" fill="#575a4c"/>
<polygon points="769,291 786,296 783,315 770,331 746,361 727,387 718,411 717,455 690,470 700,430 708,405 720,382 737,356 757,331" fill="#5c6050"/>
<polyline points="782,292 772,318 750,349 732,376 721,401 714,430 709,456" fill="none" stroke="#64615c" stroke-width="5"/>
<polygon points="740.6,187 760,246 772,267.5 788,296 776,300 750,264 736,204" fill="#7c8570"/>
<circle cx="713" cy="211" r="1.5" fill="#b9b9b5"/>
<circle cx="433" cy="316" r="2.5" fill="#3e5530"/>
<circle cx="609" cy="253" r="1.5" fill="#3e5530"/>
<circle cx="760" cy="275" r="2.5" fill="#b9b9b5"/>
<circle cx="759" cy="247" r="1.5" fill="#b9b9b5"/>
<circle cx="773" cy="295" r="1.5" fill="#4d6538"/>
<circle cx="422" cy="322" r="2" fill="#8a8a86"/>
<circle cx="760" cy="258" r="1.5" fill="#8a8a86"/>
<circle cx="674" cy="220" r="2.5" fill="#3e5530"/>
<circle cx="559" cy="263" r="2" fill="#3e5530"/>
<circle cx="526" cy="285" r="2.5" fill="#8a8a86"/>
<circle cx="631" cy="241" r="2" fill="#8a8a86"/>
<circle cx="660" cy="223" r="1.5" fill="#4d6538"/>
<circle cx="748" cy="233" r="1.5" fill="#3e5530"/>
<circle cx="470" cy="305" r="2" fill="#8a8a86"/>
<circle cx="762" cy="274" r="1.5" fill="#4d6538"/>
<circle cx="434" cy="315" r="2" fill="#4d6538"/>
<circle cx="768" cy="262" r="2.5" fill="#4d6538"/>
<circle cx="721" cy="204" r="1.5" fill="#8a8a86"/>
<circle cx="495" cy="298" r="2" fill="#b9b9b5"/>
<line x1="548" y1="446.0" x2="566" y2="478.0" stroke="#55524d" stroke-width="2.2"/>
<line x1="555" y1="442.5" x2="573" y2="474.5" stroke="#55524d" stroke-width="2.2"/>
<line x1="562" y1="439.0" x2="580" y2="471.0" stroke="#55524d" stroke-width="2.2"/>
<line x1="569" y1="435.5" x2="587" y2="467.5" stroke="#55524d" stroke-width="2.2"/>
<polyline points="424,329 739,202" fill="none" stroke="#66635e" stroke-width="5" stroke-linejoin="round"/>
<polyline points="739,200 744,217 752,257 758,268 776,293" fill="none" stroke="#66635e" stroke-width="6" stroke-linejoin="round"/>
<polyline points="757,268 706,302 645,344 595,381 552,410 520,430" fill="none" stroke="#67645f" stroke-width="5" stroke-linejoin="round"/>
<polyline points="776,285 766,305 757,331 738,356 722,381 710,405 703,430 694,455 686,468" fill="none" stroke="#64615c" stroke-width="6" stroke-linejoin="round"/>
<polyline points="424,324 450,356 481,410 503,470" fill="none" stroke="#66635e" stroke-width="5" stroke-linejoin="round"/>
<polyline points="503,470 560,530 600,566" fill="none" stroke="#66635e" stroke-width="4" stroke-linejoin="round"/>
<polyline points="778,290 820,350 885,414" fill="none" stroke="#67645f" stroke-width="3" stroke-linejoin="round"/>
<polyline points="595,300 619,361 641,422 677,434 702,437" fill="none" stroke="#68655f" stroke-width="3" stroke-linejoin="round"/>
<polyline points="493,291 521,337 542,410 560,440" fill="none" stroke="#68655f" stroke-width="3" stroke-linejoin="round"/>
<polyline points="539,288 591,404" fill="none" stroke="#68655f" stroke-width="2.5" stroke-linejoin="round"/>
<polyline points="607,401 641,447 653,471" fill="none" stroke="#68655f" stroke-width="3" stroke-linejoin="round"/>
<polyline points="647,465 723,453 830,370" fill="none" stroke="#67645f" stroke-width="3" stroke-linejoin="round"/>
<polyline points="683,466 700,520 720,560" fill="none" stroke="#67645f" stroke-width="3" stroke-linejoin="round"/>
<rect x="600" y="500" width="14" height="10" fill="#c9c9c6" transform="rotate(35 600 500)"/>
<rect x="583" y="483" width="10" height="8" fill="#9a9690" transform="rotate(35 583 483)"/>
<rect x="590" y="520" width="10" height="8" fill="#d5d5d2" transform="rotate(35 590 520)"/>
<rect x="660" y="505" width="12" height="8" fill="#b8bcc0" transform="rotate(35 660 505)"/>
<rect x="650" y="520" width="8" height="26" fill="#9a9996" transform="rotate(35 650 520)"/>
<rect x="680" y="530" width="12" height="10" fill="#c8c4b8" transform="rotate(35 680 530)"/>
<rect x="560" y="488" width="20" height="10" fill="#7f7b76" transform="rotate(35 560 488)"/>
</g></svg><!--/AERIAL-->


<!-- cursor -->
<svg style="left:0;top:0" width="1280" height="720" viewBox="0 0 1280 720">
<path d="M212.5,141 L212.5,163 M212.5,170 L212.5,192 M188,166.5 L209,166.5 M215,166.5 L236,166.5" stroke="#3a3a3a" stroke-width="1"/>
<path d="M212,158 L212,175" stroke="#111" stroke-width="1"/>
<rect x="209.5" y="163.5" width="5" height="6" fill="none" stroke="#222" stroke-width="1"/>
<path d="M205,166.5 L209,166.5 M215,166.5 L219,166.5" stroke="#bbb" stroke-width="1"/>
</svg>
<!-- scrollbar -->
<div class="a" style="left:1270px;top:676px;width:10px;height:30px;background:#e9e9e9"></div>
<div class="a" style="left:1270px;top:681px;width:10px;height:12px;background:linear-gradient(90deg,#5a5a5a,#8a8a8a 60%,#6a6a6a)"></div>
<svg style="left:0;top:0" width="1280" height="720" viewBox="0 0 1280 720"><path d="M1272.5,698.5 L1277.5,698.5 L1275,701.5Z" fill="#777"/><path d="M1274,679.5 L1276,679.5 L1275,678Z" fill="#777"/></svg>

<!-- bottom tabs -->
<div class="a" style="left:45px;top:641px;width:1211px;height:17px;background:#f8f8f8"></div>
<div class="a" style="left:45px;top:641px;width:44px;height:16px;background:#efefef"></div>
<div class="t" style="left:56px;top:645px;font-size:9.5px;letter-spacing:1.6px;color:#333">CAD</div>
<div class="a" style="left:89px;top:640px;width:52px;height:17px;background:#fff"></div>
<div class="t" style="left:99px;top:645px;font-size:9.5px;font-weight:bold;color:#111;transform:scaleX(0.85);transform-origin:0 0">RASTER</div>

<!-- status bar -->
<div class="a" style="left:0;top:657px;width:1280px;height:17px;background:#f8f8f8"></div>
<div class="a" style="left:0;top:658px;width:146px;height:16px;background:#f0f0f0"></div>
<div class="t" style="left:2px;top:662px;font-size:9px;color:#333;transform:scaleX(0.938);transform-origin:0 0">457512.99666 , 7552974.89615</div>
<div class="a" style="left:146px;top:658px;width:1px;height:16px;background:#cfcfcf"></div>
<div class="sb" style="left:147px;width:48px;color:#6e6e6e">Ortho - F8</div>
<div class="sb" style="left:195px;width:48px;color:#6e6e6e">Osnap - F3</div>
<div class="sb" style="left:243px;width:48px;color:#9a9a9a;background:#eef9e1;border-top:1px solid #5a5a5a;border-left:1px solid #5a5a5a;line-height:14px">Atrib - F4</div>
<div class="sb" style="left:291px;width:48px">SGrip - F5</div>
<div class="sb" style="left:339px;width:48px;color:#555">Grid - F7</div>
<div class="sb" style="left:387px;width:47px">Snap - F9</div>
<div class="sb" style="left:434px;width:54px">RTexto - F10</div>
<div class="sb" style="left:488px;width:50px">Nome - F11</div>
<div class="sb" style="left:538px;width:48px">Filtro - F12</div>
<div class="sb" style="left:586px;width:48px">Snap Pto</div>
<div class="sb" style="left:634px;width:48px">Snap 3D</div>
<div class="sb" style="left:682px;width:41px;color:#8a8a8a;background:#eef9e1;border-top:1px solid #5a5a5a;border-left:1px solid #5a5a5a;border-right:none;line-height:14px">Georref.</div>
<div class="a" style="left:0;top:674px;width:1280px;height:1px;background:#a8a8a8"></div>

<!-- command -->
<div class="t" style="left:2px;top:680px;font-size:10.5px;color:#111;transform:scaleX(0.95);transform-origin:0 0">Comando: Zoom: Extensão (Extents).</div>
<div class="t" style="left:3px;top:694px;font-size:10.5px;color:#111;transform:scaleX(0.935);transform-origin:0 0">&nbsp;1 "Imagem ECW" encontrado na camada "ECW_UTM_22SUL".</div>
<div class="a" style="left:0;top:707px;width:53px;height:12px;background:#f5f5f5"></div>
<div class="t" style="left:2px;top:708px;font-size:10.5px;font-weight:bold;color:#1f3b5e;transform:scaleX(0.923);transform-origin:0 0">Comando:</div>
<div class="a" style="left:0;top:719px;width:1280px;height:1px;background:#cfdbe6"></div>

</body></html>
